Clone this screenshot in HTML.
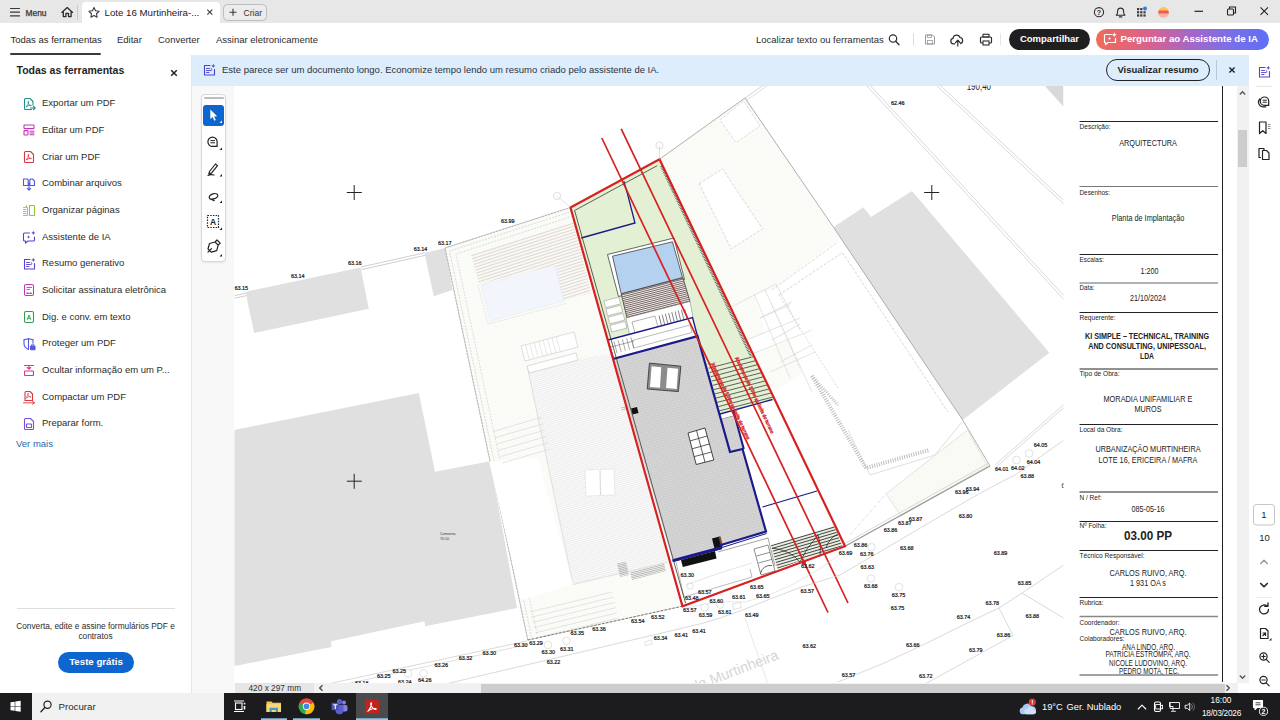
<!DOCTYPE html>
<html lang="pt">
<head>
<meta charset="utf-8">
<title>Lote 16 Murtinheira</title>
<style>
*{box-sizing:border-box;margin:0;padding:0}
html,body{width:1280px;height:720px;overflow:hidden;background:#fff;font-family:"Liberation Sans",Arial,sans-serif;color:#2c2c2c;font-size:9.5px}
.abs{position:absolute}
#titlebar{position:absolute;left:0;top:0;width:1280px;height:22.5px;background:#e7e7e7}
#toolbar{position:absolute;left:0;top:22.5px;width:1280px;height:32.5px;background:#fff}
#leftpanel{position:absolute;left:0;top:55px;width:192px;height:638px;background:#fff;border-right:1px solid #e6e6e6}
#banner{position:absolute;left:192px;top:55px;width:1057px;height:30.5px;background:#ddedfc}
#rail{position:absolute;left:1249px;top:55px;width:31px;height:638px;background:#fff}
#doc{position:absolute;left:234px;top:85.5px;width:1003px;height:597.5px;background:#fff}
#gutter{position:absolute;left:192px;top:85.5px;width:42.5px;height:607.5px;background:#f8f8f8}
#vscroll{position:absolute;left:1237px;top:85.5px;width:12px;height:597.5px;background:#f1f1f1}
#hscroll{position:absolute;left:234.5px;top:683px;width:1003px;height:10px;background:#f1f1f1}
#taskbar{position:absolute;left:0;top:693px;width:1280px;height:27px;background:#1c1c1e}
.t{position:absolute;white-space:nowrap;line-height:12px;height:12px}
.tool{position:absolute;left:42px;white-space:nowrap;line-height:12px;height:12px;font-size:9.5px;color:#2c2c2c}
svg{overflow:visible}
</style>
</head>
<body>
<div id="titlebar">
  <svg class="abs" style="left:0;top:0" width="280" height="23" viewBox="0 0 280 23">
    <g stroke="#3a3a3a" stroke-width="1.2" fill="none" stroke-linecap="round">
      <path d="M10.5 8.5H19.5M10.5 12.2H19.5M10.5 15.9H19.5"/>
    </g>
    <line x1="77.5" y1="5" x2="77.5" y2="20" stroke="#c9c9c9" stroke-width="1"/>
    <path d="M82 23V6a4 4 0 0 1 4-4h130a4 4 0 0 1 4 4V23Z" fill="#fff"/>
    <path d="M61.8 12.4L67.2 7.6L72.6 12.4M63.3 11.4V16.6H65.9V13.4H68.5V16.6H71.1V11.4" fill="none" stroke="#2c2c2c" stroke-width="1.3" stroke-linejoin="round" stroke-linecap="round"/>
    <path d="M94 7.6l1.55 3.2 3.5.5-2.55 2.45.6 3.5L94 15.6l-3.1 1.65.6-3.5-2.55-2.45 3.5-.5Z" fill="none" stroke="#3a3a3a" stroke-width="1.1" stroke-linejoin="round"/>
    <path d="M207.3 9.6l5 5M212.3 9.6l-5 5" stroke="#3a3a3a" stroke-width="1.1" fill="none"/>
    <rect x="223.5" y="4.5" width="43" height="16" rx="4" fill="#ececec" stroke="#bdbdbd"/>
    <path d="M229.5 12.3h7M233 8.8v7" stroke="#3a3a3a" stroke-width="1.1" fill="none"/>
  </svg>
  <div class="t" style="left:25.5px;top:7.4px;font-size:8.4px;color:#333;-webkit-text-stroke:.25px #333">Menu</div>
  <div class="t" style="left:104.5px;top:6.5px;font-size:9.7px;color:#222">Lote 16 Murtinheira-...</div>
  <div class="t" style="left:243.5px;top:6.5px;font-size:8.6px;color:#333">Criar</div>
  <svg class="abs" style="left:1080px;top:0" width="200" height="23" viewBox="1080 0 200 23">
    <circle cx="1099" cy="12.2" r="4.6" fill="none" stroke="#2c2c2c" stroke-width="1.1"/>
    <text x="1099" y="14.8" font-size="7" font-weight="bold" text-anchor="middle" fill="#2c2c2c" font-family="Liberation Sans, sans-serif">?</text>
    <path d="M1116.3 15.2c1.2-.9 1.3-2.2 1.3-3.6 0-2 1.2-3.5 3-3.5s3 1.500 3 3.500c0 1.400.1 2.700 1.300 3.600Z" fill="none" stroke="#2c2c2c" stroke-width="1.1" stroke-linejoin="round"/>
    <path d="M1119.4 16.9h2.4" stroke="#2c2c2c" stroke-width="1.2" fill="none" stroke-linecap="round"/>
    <g fill="#3a3a3a">
      <rect x="1137" y="8" width="2.2" height="2.2"/><rect x="1140.2" y="8" width="2.2" height="2.2"/>
      <rect x="1137" y="11.2" width="2.2" height="2.2"/><rect x="1140.2" y="11.2" width="2.2" height="2.2"/><rect x="1143.400" y="11.2" width="2.2" height="2.2"/>
      <rect x="1137" y="14.4" width="2.2" height="2.2"/><rect x="1140.2" y="14.4" width="2.2" height="2.2"/><rect x="1143.400" y="14.4" width="2.2" height="2.2"/>
    </g>
    <circle cx="1145" cy="8.600" r="2" fill="#2b7de0"/>
    <defs><clipPath id="av"><circle cx="1163.500" cy="12.400" r="5.300"/></clipPath></defs>
    <g clip-path="url(#av)"><rect x="1157" y="6" width="13" height="5" fill="#f7c64a"/><rect x="1157" y="10.5" width="13" height="3.500" fill="#ee5a5a"/><rect x="1157" y="13.500" width="13" height="5" fill="#f3b4a6"/></g>
    <path d="M1194.500 11.300h8.500" stroke="#222" stroke-width="1.200" fill="none"/>
    <rect x="1227.500" y="9" width="6" height="6" rx="1" fill="none" stroke="#222" stroke-width="1.100"/>
    <path d="M1229.500 9V7h6v6h-2" fill="none" stroke="#222" stroke-width="1.100"/>
    <path d="M1260.500 7.400l7.500 7.500M1268 7.400l-7.500 7.500" stroke="#222" stroke-width="1.100" fill="none"/>
  </svg>
</div>
<div id="toolbar">
  <div class="t" style="left:10.5px;top:11px;color:#1f1f1f">Todas as ferramentas</div>
  <div class="abs" style="left:10px;top:30.5px;width:91px;height:2px;background:#3a3a3a;border-radius:1px"></div>
  <div class="t" style="left:117px;top:11px">Editar</div>
  <div class="t" style="left:158px;top:11px">Converter</div>
  <div class="t" style="left:216px;top:11px">Assinar eletronicamente</div>
  <div class="t" style="left:756px;top:11px">Localizar texto ou ferramentas</div>
  <svg class="abs" style="left:880px;top:0" width="130" height="32" viewBox="880 22.5 130 32">
    <circle cx="893" cy="38" r="3.700" fill="none" stroke="#2c2c2c" stroke-width="1.200"/><path d="M895.700 40.800l3.300 3.400" stroke="#2c2c2c" stroke-width="1.300" stroke-linecap="round"/>
    <line x1="913.500" y1="33" x2="913.500" y2="45" stroke="#dcdcdc"/>
    <path d="M925.500 34.500h7l2 2v7h-9Z" fill="none" stroke="#9a9a9a" stroke-width="1"/><rect x="927.500" y="34.500" width="4" height="2.500" fill="none" stroke="#9a9a9a" stroke-width=".8"/><rect x="927.500" y="40" width="5" height="3.500" fill="none" stroke="#9a9a9a" stroke-width=".8"/>
    <path d="M954.800 43.300h-1.300a2.700 2.700 0 0 1-.5-5.350 3.600 3.600 0 0 1 7-.95 2.900 2.900 0 0 1 2.600 2.900 3 3 0 0 1-2 3.200" fill="none" stroke="#2c2c2c" stroke-width="1.200" stroke-linecap="round"/>
    <path d="M957.800 45.500v-5.500M955.600 42l2.200-2.300 2.200 2.300" fill="none" stroke="#2c2c2c" stroke-width="1.200" stroke-linecap="round" stroke-linejoin="round"/>
    <rect x="980.500" y="36.500" width="11" height="6" rx="1" fill="none" stroke="#2c2c2c" stroke-width="1.200"/><rect x="983" y="33.800" width="6" height="2.700" fill="none" stroke="#2c2c2c" stroke-width="1.100"/><rect x="983" y="40.500" width="6" height="4" fill="#fff" stroke="#2c2c2c" stroke-width="1.100"/>
    <line x1="1000.500" y1="33" x2="1000.500" y2="45" stroke="#e4e4e4"/>
  </svg>
  <div class="abs" style="left:1009px;top:6px;width:81px;height:21.5px;border-radius:11px;background:#1f1f1f"></div>
  <div class="t" style="left:1009px;top:10.5px;width:81px;text-align:center;color:#fff;font-weight:bold;font-size:9.500px">Compartilhar</div>
  <div class="abs" style="left:1096px;top:6.5px;width:173px;height:21px;border-radius:10.5px;background:linear-gradient(90deg,#f26a57 0%,#d9628a 30%,#a467c8 55%,#7a6fe8 78%,#5c70f5 100%)"></div>
  <svg class="abs" style="left:1102px;top:8.5px" width="16" height="16" viewBox="0 0 16 16"><path d="M2.500 3.500h7.500M13.500 7v4.500h-7.500l-2.500 2.200v-2.200h-1v-8" fill="none" stroke="#fff" stroke-width="1.200" stroke-linejoin="round"/><path d="M12.300 1.200l.7 1.800 1.800.7-1.800.7-.7 1.800-.7-1.800-1.800-.7 1.800-.7Z" fill="#fff"/><path d="M7.500 5.800l.5 1.200 1.200.5-1.200.5-.5 1.200-.5-1.200-1.200-.5 1.200-.5Z" fill="#fff"/></svg>
  <div class="t" style="left:1120.500px;top:10.5px;color:#fff;font-weight:bold;font-size:9.700px">Perguntar ao Assistente de IA</div>
</div>
<div id="leftpanel">
<div class="t" style="left:16.5px;top:8.500px;font-size:10.500px;font-weight:bold;color:#1f1f1f">Todas as ferramentas</div>
<svg class="abs" style="left:168px;top:12px" width="12" height="12" viewBox="0 0 12 12"><path d="M3.200 3.200l5.600 5.600M8.800 3.200l-5.600 5.600" stroke="#222" stroke-width="1.500" fill="none"/></svg>
<svg class="abs" style="left:22px;top:41.7px" width="14" height="14" viewBox="0 0 14 14"><g fill="none" stroke="#1d8f8a" stroke-width="1.100" stroke-linejoin="round" stroke-linecap="round"><path d="M9.500 12.500h-6a1 1 0 0 1-1-1v-9a1 1 0 0 1 1-1h4.500l3 3v3.500" /><path d="M4.6 9.6c.9-1.400 1.800-3.200 2.200-4.600.200-.800-.500-1.100-.700-.300-.300 1.400 1.200 3.600 2.800 4.100.900.200.900-.600 0-.600-1.400 0-3.200.600-4.300 1.400-.600.500-.200 1 .000 0" stroke-width=".8"/><path d="M8.500 11h4.500M11.500 9.300l1.700 1.700-1.700 1.700"/></g></svg>
<div class="tool" style="top:42.4px">Exportar um PDF</div>
<svg class="abs" style="left:22px;top:68.4px" width="14" height="14" viewBox="0 0 14 14"><g fill="none" stroke="#c038b8" stroke-width="1.100" stroke-linejoin="round" stroke-linecap="round"><rect x="2" y="2" width="10" height="3.600" rx=".6"/><rect x="2" y="7.600" width="4" height="4.400" rx=".6"/><path d="M8 8.200h4M8 10h4M8 11.800h4"/></g></svg>
<div class="tool" style="top:69.1px">Editar um PDF</div>
<svg class="abs" style="left:22px;top:95.0px" width="14" height="14" viewBox="0 0 14 14"><g fill="none" stroke="#d7373f" stroke-width="1.100" stroke-linejoin="round" stroke-linecap="round"><path d="M3.500 1.500h5l3 3v7a1 1 0 0 1-1 1h-7a1 1 0 0 1-1-1v-9a1 1 0 0 1 1-1Z"/><path d="M4.6 9.6c.9-1.400 1.800-3.200 2.200-4.600.200-.800-.500-1.100-.700-.300-.300 1.400 1.200 3.600 2.800 4.100.900.200.900-.600 0-.600-1.400 0-3.200.600-4.300 1.400-.600.500-.200 1 .000 0" stroke-width=".8"/></g></svg>
<div class="tool" style="top:95.7px">Criar um PDF</div>
<svg class="abs" style="left:22px;top:121.7px" width="14" height="14" viewBox="0 0 14 14"><g fill="none" stroke="#5258e4" stroke-width="1.100" stroke-linejoin="round" stroke-linecap="round"><path d="M6.200 3v5.500h-4.700v-6.500h3.700ZM7.800 3v5.500h4.700v-4.500l-2-2h-1.700ZM7 6v7M5.300 11.400l1.700 1.700 1.700-1.700"/></g></svg>
<div class="tool" style="top:122.4px">Combinar arquivos</div>
<svg class="abs" style="left:22px;top:148.4px" width="14" height="14" viewBox="0 0 14 14"><g fill="none" stroke="#8dc63f" stroke-width="1.100" stroke-linejoin="round" stroke-linecap="round"><rect x="7.500" y="2.500" width="5" height="10" rx=".6"/><path d="M5.500 4.500v8h-4M1.500 6.500h2.500M1.500 8.500h2.500M1.500 10.500h2.500M1.500 4.500h2l1-2v2" stroke-width=".9"/></g></svg>
<div class="tool" style="top:149.1px">Organizar páginas</div>
<svg class="abs" style="left:22px;top:175.1px" width="14" height="14" viewBox="0 0 14 14"><g fill="none" stroke="#5a3fd0" stroke-width="1.100" stroke-linejoin="round" stroke-linecap="round"><path d="M7.500 3h-5a1 1 0 0 0-1 1v6a1 1 0 0 0 1 1h1v2.200l2.500-2.200h5.500a1 1 0 0 0 1-1v-3"/><path d="M11.300.8l.6 1.500 1.500.6-1.500.6-.6 1.500-.6-1.500-1.500-.6 1.500-.6Z" fill="#5a3fd0" stroke="none"/><path d="M6.500 5.300l.5 1.200 1.200.5-1.200.5-.5 1.200-.5-1.200-1.200-.5 1.200-.5Z" fill="#5a3fd0" stroke="none"/></g></svg>
<div class="tool" style="top:175.8px">Assistente de IA</div>
<svg class="abs" style="left:22px;top:201.7px" width="14" height="14" viewBox="0 0 14 14"><g fill="none" stroke="#5a3fd0" stroke-width="1.100" stroke-linejoin="round" stroke-linecap="round"><path d="M8 2.500h-5.500v9.500h10v-5.500"/><path d="M4.500 5.500h3M4.500 7.500h4M4.500 9.500h2.500" stroke-width=".9"/><path d="M11.300.8l.6 1.500 1.500.6-1.500.6-.6 1.500-.6-1.500-1.500-.6 1.500-.6Z" fill="#5a3fd0" stroke="none"/><path d="M9 7.500l1.200-1-1.200-1" stroke-width=".9"/></g></svg>
<div class="tool" style="top:202.4px">Resumo generativo</div>
<svg class="abs" style="left:22px;top:228.4px" width="14" height="14" viewBox="0 0 14 14"><g fill="none" stroke="#c038b8" stroke-width="1.100" stroke-linejoin="round" stroke-linecap="round"><rect x="2.500" y="1.500" width="9" height="11" rx="1.500"/><path d="M5 4.500h4.500M5 6.500h2.500" stroke-width=".9"/><path d="M5 10.300h1.200M8 10.300h1.200" stroke-width="1.600"/></g></svg>
<div class="tool" style="top:229.1px">Solicitar assinatura eletrônica</div>
<svg class="abs" style="left:22px;top:255.1px" width="14" height="14" viewBox="0 0 14 14"><g fill="none" stroke="#2d9d4f" stroke-width="1.100" stroke-linejoin="round" stroke-linecap="round"><rect x="2.500" y="1.500" width="9" height="11" rx="1.500"/><path d="M5.300 9.500l1.700-4.500 1.700 4.500M5.900 8.200h2.200" stroke-width=".9"/></g></svg>
<div class="tool" style="top:255.8px">Dig. e conv. em texto</div>
<svg class="abs" style="left:22px;top:281.7px" width="14" height="14" viewBox="0 0 14 14"><g fill="none" stroke="#5258e4" stroke-width="1.100" stroke-linejoin="round" stroke-linecap="round"><path d="M6.500 1.500c-1.500.8-3 1.100-4.500 1.100v4c0 2.800 1.800 4.800 4.500 5.900ZM6.500 1.500c1.500.8 3 1.100 4.500 1.100v3"/><rect x="8.500" y="9" width="4.500" height="3.800" rx=".5" fill="#5258e4"/><path d="M9.700 9v-1a1.100 1.100 0 0 1 2.200 0v1" stroke-width=".9"/></g></svg>
<div class="tool" style="top:282.4px">Proteger um PDF</div>
<svg class="abs" style="left:22px;top:308.4px" width="14" height="14" viewBox="0 0 14 14"><g fill="none" stroke="#d83790" stroke-width="1.100" stroke-linejoin="round" stroke-linecap="round"><path d="M2.500 2.500h9M7 2.500v3.500M5.300 4.500l1.700 1.700 1.700-1.700"/><rect x="2.500" y="8" width="9" height="4.500" rx=".5"/></g></svg>
<div class="tool" style="top:309.1px">Ocultar informação em um P...</div>
<svg class="abs" style="left:22px;top:335.1px" width="14" height="14" viewBox="0 0 14 14"><g fill="none" stroke="#d7373f" stroke-width="1.100" stroke-linejoin="round" stroke-linecap="round"><path d="M4 1.500h4l2.500 2.500v6.500h-7.500v-8a1 1 0 0 1 1-1Z"/><path d="M1.500 12.800h11M10.500 11.300l2 1.500-2 1.500" stroke-width=".9"/><path d="M4.6 9.6c.9-1.400 1.800-3.200 2.200-4.600.200-.800-.500-1.100-.700-.300-.300 1.400 1.200 3.600 2.800 4.100.900.200.900-.600 0-.600-1.400 0-3.200.600-4.300 1.400-.600.500-.200 1 .000 0" stroke-width=".7" transform="translate(.3,-.8) scale(.9)"/></g></svg>
<div class="tool" style="top:335.8px">Compactar um PDF</div>
<svg class="abs" style="left:22px;top:361.7px" width="14" height="14" viewBox="0 0 14 14"><g fill="none" stroke="#7a4fd8" stroke-width="1.100" stroke-linejoin="round" stroke-linecap="round"><path d="M3.500 1.500h5l3 3v7a1 1 0 0 1-1 1h-7a1 1 0 0 1-1-1v-9a1 1 0 0 1 1-1Z"/><rect x="4.500" y="7" width="5" height="3.500" rx=".5"/></g></svg>
<div class="tool" style="top:362.4px">Preparar form.</div>
<div class="t" style="left:16px;top:383px;color:#2768b3">Ver mais</div>
<div class="abs" style="left:17px;top:552.500px;width:158px;height:1px;background:#dedede"></div>
<div class="t" style="left:0;top:564.800px;width:191px;text-align:center;font-size:8.300px;color:#2c2c2c">Converta, edite e assine formulários PDF e</div>
<div class="t" style="left:0;top:574.800px;width:191px;text-align:center;font-size:8.300px;color:#2c2c2c">contratos</div>
<div class="abs" style="left:58px;top:597px;width:76px;height:21px;border-radius:10.500px;background:#0d66d0"></div>
<div class="t" style="left:58px;top:600.800px;width:76px;text-align:center;color:#fff;font-weight:bold;font-size:9.700px">Teste grátis</div>
</div>
<div id="banner">
  <svg class="abs" style="left:10px;top:8px" width="14" height="14" viewBox="0 0 14 14"><g fill="none" stroke="#4a44c8" stroke-width="1.100" stroke-linejoin="round" stroke-linecap="round"><path d="M8 2.500h-5.500v9.500h10v-5.500"/><path d="M4.500 5.500h3M4.500 7.500h4M4.500 9.500h2.500" stroke-width=".9"/><path d="M11.300.8l.6 1.500 1.500.6-1.500.6-.6 1.500-.6-1.500-1.500-.6 1.500-.6Z" fill="#4a44c8" stroke="none"/><path d="M9 7.500l1.200-1-1.200-1" stroke-width=".9"/></g></svg>
  <div class="t" style="left:30px;top:8.700px;color:#2a3340">Este parece ser um documento longo. Economize tempo lendo um resumo criado pelo assistente de IA.</div>
  <div class="abs" style="left:914px;top:4px;width:104px;height:22px;border:1.500px solid #222;border-radius:11px"></div>
  <div class="t" style="left:914px;top:8.700px;width:104px;text-align:center;font-weight:bold;color:#1f1f1f">Visualizar resumo</div>
  <div class="abs" style="left:1023.500px;top:5px;width:1px;height:20px;background:#b9c6d4"></div>
  <svg class="abs" style="left:1034px;top:9px" width="12" height="12" viewBox="0 0 12 12"><path d="M3.400 3.400l5.200 5.200M8.600 3.400l-5.200 5.200" stroke="#222" stroke-width="1.400" fill="none"/></svg>
</div>
<div id="gutter"></div>
<div id="doc"></div>
<svg class="abs" style="left:0;top:0" width="1280" height="720" viewBox="0 0 1280 720">
<defs><clipPath id="dv"><rect x="234.5" y="85.5" width="829" height="597.5"/></clipPath></defs>
<g clip-path="url(#dv)">
<polygon points="245.5,291.8 360.5,267.5 368.8,308.8 254.2,333.0" fill="#e0e0e0" stroke="none" stroke-width="1" />
<polygon points="424.5,253.0 445.0,248.0 452.5,290.0 433.8,296.2" fill="#e0e0e0" stroke="none" stroke-width="1" />
<polygon points="234.0,430.0 418.8,393.0 435.0,471.8 490.0,461.2 517.0,608.0 425.0,626.2 424.5,621.2 331.2,641.2 331.2,647.0 234.0,666.2" fill="#e0e0e0" stroke="none" stroke-width="1" />
<polygon points="833.5,227.3 863.3,207.3 871.0,217.0 912.0,191.0 1049.3,352.7 962.7,420.0" fill="#e0e0e0" stroke="none" stroke-width="1" />
<polygon points="1045.0,86.0 1063.5,86.0 1063.5,106.7" fill="#d9d9d9" stroke="none" stroke-width="1" />
<line x1="234.0" y1="295.8" x2="246.0" y2="293.2" stroke="#cfcfcf" stroke-width="1" />
<line x1="234.0" y1="298.3" x2="246.0" y2="295.7" stroke="#cfcfcf" stroke-width="1" />
<line x1="361.0" y1="267.0" x2="424.5" y2="252.8" stroke="#cfcfcf" stroke-width="1" />
<line x1="361.6" y1="269.6" x2="425.0" y2="255.4" stroke="#cfcfcf" stroke-width="1" />
<polygon points="445.0,248.0 570.5,207.5 682.5,606.2 527.8,640.0" fill="#fdfefb" stroke="#bdbdbd" stroke-width="0.7" />
<clipPath id="c1"><polygon points="445.0,248.0 570.5,207.5 682.5,606.2 527.8,640.0"/></clipPath>
<path clip-path="url(#c1)" d="M251.2 262.4L725.1 111.2M251.9 264.5L725.7 113.3M252.5 266.6L726.4 115.4M253.2 268.7L727.1 117.5M253.9 270.8L727.7 119.6M254.5 272.9L728.4 121.7M255.2 275.0L729.1 123.8M255.9 277.1L729.8 125.9M256.5 279.2L730.4 128.0M257.2 281.3L731.1 130.1M257.9 283.4L731.8 132.2M258.6 285.5L732.4 134.3M259.2 287.6L733.1 136.3M259.9 289.7L733.8 138.4M260.6 291.8L734.4 140.5M261.2 293.9L735.1 142.6M261.9 296.0L735.8 144.7M262.6 298.1L736.4 146.8M263.2 300.2L737.1 148.9M263.9 302.3L737.8 151.0M264.6 304.3L738.4 153.1M265.2 306.4L739.1 155.2M265.9 308.5L739.8 157.3M266.6 310.6L740.5 159.4M267.3 312.7L741.1 161.5M267.9 314.8L741.8 163.6M268.6 316.9L742.5 165.7M269.3 319.0L743.1 167.8M269.9 321.1L743.8 169.9M270.6 323.2L744.5 172.0M271.3 325.3L745.1 174.1M271.9 327.4L745.8 176.2M272.6 329.5L746.5 178.3M273.3 331.6L747.1 180.4M273.9 333.7L747.8 182.5M274.6 335.8L748.5 184.6M275.3 337.9L749.1 186.6M275.9 340.0L749.8 188.7M276.6 342.1L750.5 190.8M277.3 344.2L751.2 192.9M278.0 346.3L751.8 195.0M278.6 348.4L752.5 197.1M279.3 350.5L753.2 199.2M280.0 352.6L753.8 201.3M280.6 354.6L754.5 203.4M281.3 356.7L755.2 205.5M282.0 358.8L755.8 207.6M282.6 360.9L756.5 209.7M283.3 363.0L757.2 211.8M284.0 365.1L757.8 213.9M284.6 367.2L758.5 216.0M285.3 369.3L759.2 218.1M286.0 371.4L759.9 220.2M286.6 373.5L760.5 222.3M287.3 375.6L761.2 224.4M288.0 377.7L761.9 226.5M288.7 379.8L762.5 228.6M289.3 381.9L763.2 230.7M290.0 384.0L763.9 232.8M290.7 386.1L764.5 234.9M291.3 388.2L765.2 236.9M292.0 390.3L765.9 239.0M292.7 392.4L766.5 241.1M293.3 394.5L767.2 243.2M294.0 396.6L767.9 245.3M294.7 398.7L768.5 247.4M295.3 400.8L769.2 249.5M296.0 402.9L769.9 251.6M296.7 404.9L770.6 253.7M297.4 407.0L771.2 255.8M298.0 409.1L771.9 257.9M298.7 411.2L772.6 260.0M299.4 413.3L773.2 262.1M300.0 415.4L773.9 264.2M300.7 417.5L774.6 266.3M301.4 419.6L775.2 268.4M302.0 421.7L775.9 270.5M302.7 423.8L776.6 272.6M303.4 425.9L777.2 274.7M304.0 428.0L777.9 276.8M304.7 430.1L778.6 278.9M305.4 432.2L779.2 281.0M306.0 434.3L779.9 283.1M306.7 436.4L780.6 285.2M307.4 438.5L781.3 287.2M308.1 440.6L781.9 289.3M308.7 442.7L782.6 291.4M309.4 444.8L783.3 293.5M310.1 446.9L783.9 295.6M310.7 449.0L784.6 297.7M311.4 451.1L785.3 299.8M312.1 453.2L785.9 301.9M312.7 455.2L786.6 304.0M313.4 457.3L787.3 306.1M314.1 459.4L787.9 308.2M314.7 461.5L788.6 310.3M315.4 463.6L789.3 312.4M316.1 465.7L790.0 314.5M316.7 467.8L790.6 316.6M317.4 469.9L791.3 318.7M318.1 472.0L792.0 320.8M318.8 474.1L792.6 322.9M319.4 476.2L793.3 325.0M320.1 478.3L794.0 327.1M320.8 480.4L794.6 329.2M321.4 482.5L795.3 331.3M322.1 484.6L796.0 333.4M322.8 486.7L796.6 335.5M323.4 488.8L797.3 337.6M324.1 490.9L798.0 339.6M324.8 493.0L798.6 341.7M325.4 495.1L799.3 343.8M326.1 497.2L800.0 345.9M326.8 499.3L800.7 348.0M327.4 501.4L801.3 350.1M328.1 503.5L802.0 352.2M328.8 505.5L802.7 354.3M329.5 507.6L803.3 356.4M330.1 509.7L804.0 358.5M330.8 511.8L804.7 360.6M331.5 513.9L805.3 362.7M332.1 516.0L806.0 364.8M332.8 518.1L806.7 366.9M333.5 520.2L807.3 369.0M334.1 522.3L808.0 371.1M334.8 524.4L808.7 373.2M335.5 526.5L809.3 375.3M336.1 528.6L810.0 377.4M336.8 530.7L810.7 379.5M337.5 532.8L811.4 381.6M338.2 534.9L812.0 383.7M338.8 537.0L812.7 385.8M339.5 539.1L813.4 387.9M340.2 541.2L814.0 389.9M340.8 543.3L814.7 392.0M341.5 545.4L815.4 394.1M342.2 547.5L816.0 396.2M342.8 549.6L816.7 398.3M343.5 551.7L817.4 400.4M344.2 553.8L818.0 402.5M344.8 555.8L818.7 404.6M345.5 557.9L819.4 406.7M346.2 560.0L820.1 408.8M346.8 562.1L820.7 410.9M347.5 564.2L821.4 413.0M348.2 566.3L822.1 415.1M348.9 568.4L822.7 417.2M349.5 570.5L823.4 419.3M350.2 572.6L824.1 421.4M350.9 574.7L824.7 423.5M351.5 576.8L825.4 425.6M352.2 578.9L826.1 427.7M352.9 581.0L826.7 429.8M353.5 583.1L827.4 431.9M354.2 585.2L828.1 434.0M354.9 587.3L828.7 436.1M355.5 589.4L829.4 438.2M356.2 591.5L830.1 440.2M356.9 593.6L830.8 442.3M357.5 595.7L831.4 444.4M358.2 597.8L832.1 446.5M358.9 599.9L832.8 448.6M359.6 602.0L833.4 450.7M360.2 604.1L834.1 452.8M360.9 606.2L834.8 454.9M361.6 608.2L835.4 457.0M362.2 610.3L836.1 459.1M362.9 612.4L836.8 461.2M363.6 614.5L837.4 463.3M364.2 616.6L838.1 465.4M364.9 618.7L838.8 467.5M365.6 620.8L839.4 469.6M366.2 622.9L840.1 471.7M366.9 625.0L840.8 473.8M367.6 627.1L841.5 475.9M368.3 629.2L842.1 478.0M368.9 631.3L842.8 480.1M369.6 633.4L843.5 482.2M370.3 635.5L844.1 484.3M370.9 637.6L844.8 486.4M371.6 639.7L845.5 488.5M372.3 641.8L846.1 490.5M372.9 643.9L846.8 492.6M373.6 646.0L847.5 494.7M374.3 648.1L848.1 496.8M374.9 650.2L848.8 498.9M375.6 652.3L849.5 501.0M376.3 654.4L850.1 503.1M376.9 656.5L850.8 505.2M377.6 658.5L851.5 507.3M378.3 660.6L852.2 509.4M379.0 662.7L852.8 511.5M379.6 664.8L853.5 513.6M380.3 666.9L854.2 515.7M381.0 669.0L854.8 517.8M381.6 671.1L855.5 519.9M382.3 673.2L856.2 522.0M383.0 675.3L856.8 524.1M383.6 677.4L857.5 526.2M384.3 679.5L858.2 528.3M385.0 681.6L858.8 530.4M385.6 683.7L859.5 532.5M386.3 685.8L860.2 534.6M387.0 687.9L860.9 536.7M387.6 690.0L861.5 538.8M388.3 692.1L862.2 540.8M389.0 694.2L862.9 542.9M389.7 696.3L863.5 545.0M390.3 698.4L864.2 547.1M391.0 700.5L864.9 549.2M391.7 702.6L865.5 551.3M392.3 704.7L866.2 553.4M393.0 706.8L866.9 555.5M393.7 708.8L867.5 557.6M394.3 710.9L868.2 559.7M395.0 713.0L868.9 561.8M395.7 715.1L869.5 563.9M396.3 717.2L870.2 566.0M397.0 719.3L870.9 568.1M397.7 721.4L871.6 570.2M398.4 723.5L872.2 572.3M399.0 725.6L872.9 574.4M399.7 727.7L873.6 576.5M400.4 729.8L874.2 578.6M401.0 731.9L874.9 580.7M401.7 734.0L875.6 582.8M402.4 736.1L876.2 584.9" stroke="#f3f5ec" stroke-width="0.6" fill="none"/>
<polyline points="527.8,640.0 445.0,248.0 570.5,207.5" fill="none" stroke="#9a9a9a" stroke-width="0.6" stroke-dasharray="2 1.2"/>
<polyline points="531.5,637.0 449.5,251.0 571.5,211.5" fill="none" stroke="#c4c4c4" stroke-width="0.6" stroke-dasharray="2 1.2"/>
<polyline points="537.0,634.0 456.0,254.0 573.0,216.0" fill="none" stroke="#c8c8c8" stroke-width="0.6" stroke-dasharray="2 1.2"/>
<polygon points="471.0,254.0 574.0,221.0 591.0,293.0 562.5,301.0 555.0,265.0 479.0,284.0" fill="#faf8f5" stroke="none" stroke-width="1" />
<clipPath id="c2"><polygon points="471.0,254.0 574.0,221.0 591.0,293.0 562.5,301.0 555.0,265.0 479.0,284.0"/></clipPath>
<path clip-path="url(#c2)" d="M437.9 212.9L579.1 167.9M438.8 215.8L580.0 170.7M439.7 218.6L580.9 173.6M440.6 221.5L581.8 176.4M441.5 224.4L582.7 179.3M442.4 227.2L583.6 182.2M443.3 230.1L584.5 185.0M444.2 232.9L585.5 187.9M445.2 235.8L586.4 190.7M446.1 238.7L587.3 193.6M447.0 241.5L588.2 196.4M447.9 244.4L589.1 199.3M448.8 247.2L590.0 202.2M449.7 250.1L590.9 205.0M450.6 252.9L591.8 207.9M451.5 255.8L592.8 210.7M452.5 258.7L593.7 213.6M453.4 261.5L594.6 216.5M454.3 264.4L595.5 219.3M455.2 267.2L596.4 222.2M456.1 270.1L597.3 225.0M457.0 272.9L598.2 227.9M457.9 275.8L599.1 230.7M458.8 278.7L600.0 233.6M459.8 281.5L601.0 236.5M460.7 284.4L601.9 239.3M461.6 287.2L602.8 242.2M462.5 290.1L603.7 245.0M463.4 293.0L604.6 247.9M464.3 295.8L605.5 250.7M465.2 298.7L606.4 253.6M466.1 301.5L607.3 256.5M467.1 304.4L608.3 259.3M468.0 307.2L609.2 262.2M468.9 310.1L610.1 265.0M469.8 313.0L611.0 267.9M470.7 315.8L611.9 270.8M471.6 318.7L612.8 273.6M472.5 321.5L613.7 276.5M473.4 324.4L614.6 279.3M474.3 327.2L615.6 282.2M475.3 330.1L616.5 285.0M476.2 333.0L617.4 287.9M477.1 335.8L618.3 290.8M478.0 338.7L619.2 293.6M478.9 341.5L620.1 296.5M479.8 344.4L621.0 299.3M480.7 347.3L621.9 302.2M481.6 350.1L622.9 305.0M482.6 353.0L623.8 307.9" stroke="#d6cfc8" stroke-width="0.8" fill="none"/>
<polygon points="481.0,285.0 555.0,265.5 564.0,301.0 490.0,321.0" fill="#f2f5fc" stroke="#e4e8ef" stroke-width="0.5" />
<polyline points="478.0,284.5 488.0,324.0 566.0,303.5" fill="none" stroke="#d5d5d5" stroke-width="0.6" stroke-dasharray="2 1"/>
<polygon points="527.5,367.5 612.5,353.5 668.5,562.0 573.0,584.5" fill="#fbfbfb" stroke="none" stroke-width="1" />
<clipPath id="c3"><polygon points="527.5,367.5 612.5,353.5 668.5,562.0 573.0,584.5"/></clipPath>
<path clip-path="url(#c3)" d="M430.7 370.4L696.6 301.7M431.2 372.4L697.1 303.6M431.7 374.3L697.6 305.5M432.2 376.2L698.1 307.5M432.7 378.2L698.6 309.4M433.2 380.1L699.1 311.4M433.7 382.1L699.6 313.3M434.2 384.0L700.1 315.2M434.7 385.9L700.6 317.2M435.2 387.9L701.1 319.1M435.7 389.8L701.6 321.0M436.2 391.7L702.1 323.0M436.7 393.7L702.6 324.9M437.2 395.6L703.1 326.8M437.7 397.5L703.6 328.8M438.2 399.5L704.1 330.7M438.7 401.4L704.6 332.7M439.2 403.4L705.1 334.6M439.7 405.3L705.6 336.5M440.2 407.2L706.1 338.5M440.7 409.2L706.6 340.4M441.2 411.1L707.1 342.3M441.7 413.0L707.6 344.3M442.2 415.0L708.1 346.2M442.7 416.9L708.6 348.1M443.2 418.8L709.1 350.1M443.7 420.8L709.6 352.0M444.2 422.7L710.1 354.0M444.7 424.7L710.6 355.9M445.2 426.6L711.1 357.8M445.7 428.5L711.6 359.8M446.2 430.5L712.1 361.7M446.7 432.4L712.6 363.6M447.2 434.3L713.1 365.6M447.7 436.3L713.6 367.5M448.2 438.2L714.1 369.4M448.7 440.1L714.6 371.4M449.2 442.1L715.1 373.3M449.7 444.0L715.6 375.3M450.2 446.0L716.1 377.2M450.7 447.9L716.6 379.1M451.2 449.8L717.1 381.1M451.7 451.8L717.6 383.0M452.2 453.7L718.1 384.9M452.7 455.6L718.6 386.9M453.2 457.6L719.1 388.8M453.7 459.5L719.6 390.7M454.2 461.4L720.1 392.7M454.7 463.4L720.6 394.6M455.2 465.3L721.1 396.6M455.7 467.3L721.6 398.5M456.2 469.2L722.1 400.4M456.7 471.1L722.6 402.4M457.2 473.1L723.1 404.3M457.7 475.0L723.6 406.2M458.2 476.9L724.1 408.2M458.7 478.9L724.6 410.1M459.2 480.8L725.1 412.0M459.7 482.7L725.6 414.0M460.2 484.7L726.1 415.9M460.7 486.6L726.6 417.9M461.2 488.6L727.1 419.8M461.7 490.5L727.6 421.7M462.2 492.4L728.1 423.7M462.7 494.4L728.6 425.6M463.2 496.3L729.1 427.5M463.7 498.2L729.6 429.5M464.2 500.2L730.1 431.4M464.7 502.1L730.6 433.3M465.2 504.0L731.1 435.3M465.7 506.0L731.6 437.2M466.2 507.9L732.1 439.2M466.7 509.9L732.6 441.1M467.2 511.8L733.1 443.0M467.7 513.7L733.6 445.0M468.2 515.7L734.1 446.9M468.7 517.6L734.6 448.8M469.2 519.5L735.1 450.8M469.7 521.5L735.6 452.7M470.2 523.4L736.1 454.6M470.7 525.3L736.6 456.6M471.2 527.3L737.1 458.5M471.7 529.2L737.6 460.5M472.2 531.2L738.1 462.4M472.7 533.1L738.6 464.3M473.2 535.0L739.1 466.3M473.7 537.0L739.6 468.2M474.2 538.9L740.1 470.1M474.7 540.8L740.6 472.1M475.2 542.8L741.1 474.0M475.7 544.7L741.6 475.9M476.2 546.6L742.1 477.9M476.7 548.6L742.6 479.8M477.2 550.5L743.1 481.8M477.7 552.5L743.6 483.7M478.2 554.4L744.1 485.6M478.7 556.3L744.6 487.6M479.3 558.3L745.1 489.5M479.8 560.2L745.6 491.4M480.3 562.1L746.1 493.4M480.8 564.1L746.6 495.3M481.3 566.0L747.1 497.2M481.8 567.9L747.6 499.2M482.3 569.9L748.1 501.1M482.8 571.8L748.6 503.1M483.3 573.7L749.1 505.0M483.8 575.7L749.6 506.9M484.3 577.6L750.1 508.9M484.8 579.6L750.6 510.8M485.3 581.5L751.1 512.7M485.8 583.4L751.6 514.7M486.3 585.4L752.1 516.6M486.8 587.3L752.6 518.5M487.3 589.2L753.1 520.5M487.8 591.2L753.6 522.4M488.3 593.1L754.1 524.4M488.8 595.0L754.6 526.3M489.3 597.0L755.2 528.2M489.8 598.9L755.7 530.2M490.3 600.9L756.2 532.1M490.8 602.8L756.7 534.0M491.3 604.7L757.2 536.0M491.8 606.7L757.7 537.9M492.3 608.6L758.2 539.8M492.8 610.5L758.7 541.8M493.3 612.5L759.2 543.7M493.8 614.4L759.7 545.6M494.3 616.3L760.2 547.6M494.8 618.3L760.7 549.5M495.3 620.2L761.2 551.5M495.8 622.2L761.7 553.4M496.3 624.1L762.2 555.3M496.8 626.0L762.7 557.3M497.3 628.0L763.2 559.2M497.8 629.9L763.7 561.1M498.3 631.8L764.2 563.1M498.8 633.8L764.7 565.0M499.3 635.7L765.2 566.9" stroke="#e3e3e3" stroke-width="0.6" fill="none"/>
<polyline points="527.5,367.5 573.0,584.5 668.5,562.0" fill="none" stroke="#cfcfcf" stroke-width="0.6" />
<polygon points="489.0,461.5 537.5,457.5 573.0,584.5 521.0,600.0" fill="#ffffff" stroke="none" stroke-width="1" />
<polygon points="521.0,346.0 574.0,332.0 578.0,347.0 525.0,361.0" fill="#ffffff" stroke="#c9c9c9" stroke-width="0.6" />
<line x1="525.4" y1="344.8" x2="529.4" y2="359.8" stroke="#cfcfcf" stroke-width="0.5" />
<line x1="529.8" y1="343.7" x2="533.8" y2="358.7" stroke="#cfcfcf" stroke-width="0.5" />
<line x1="534.2" y1="342.5" x2="538.2" y2="357.5" stroke="#cfcfcf" stroke-width="0.5" />
<line x1="538.7" y1="341.3" x2="542.7" y2="356.3" stroke="#cfcfcf" stroke-width="0.5" />
<line x1="543.1" y1="340.2" x2="547.1" y2="355.2" stroke="#cfcfcf" stroke-width="0.5" />
<line x1="547.5" y1="339.0" x2="551.5" y2="354.0" stroke="#cfcfcf" stroke-width="0.5" />
<line x1="551.9" y1="337.8" x2="555.9" y2="352.8" stroke="#cfcfcf" stroke-width="0.5" />
<line x1="556.3" y1="336.7" x2="560.3" y2="351.7" stroke="#cfcfcf" stroke-width="0.5" />
<polygon points="527.0,366.0 576.0,353.0 578.0,360.0 529.0,373.0" fill="#ffffff" stroke="#c4c4c4" stroke-width="0.6" />
<line x1="493.0" y1="431.5" x2="541.0" y2="417.5" stroke="#d4d4d4" stroke-width="0.6" />
<line x1="494.8" y1="437.8" x2="542.8" y2="423.8" stroke="#d4d4d4" stroke-width="0.6" />
<line x1="496.6" y1="444.1" x2="544.6" y2="430.1" stroke="#d4d4d4" stroke-width="0.6" />
<line x1="498.4" y1="450.4" x2="546.4" y2="436.4" stroke="#d4d4d4" stroke-width="0.6" />
<line x1="500.2" y1="456.7" x2="548.2" y2="442.7" stroke="#d4d4d4" stroke-width="0.6" />
<line x1="502.0" y1="463.0" x2="550.0" y2="449.0" stroke="#d4d4d4" stroke-width="0.6" />
<line x1="530.0" y1="612.0" x2="612.0" y2="592.0" stroke="#cccccc" stroke-width="0.5" />
<line x1="531.3" y1="617.2" x2="613.3" y2="597.2" stroke="#cccccc" stroke-width="0.5" />
<line x1="532.6" y1="622.4" x2="614.6" y2="602.4" stroke="#cccccc" stroke-width="0.5" />
<line x1="533.9" y1="627.6" x2="615.9" y2="607.6" stroke="#cccccc" stroke-width="0.5" />
<line x1="535.2" y1="632.8" x2="617.2" y2="612.8" stroke="#cccccc" stroke-width="0.5" />
<line x1="536.5" y1="638.0" x2="618.5" y2="618.0" stroke="#cccccc" stroke-width="0.5" />
<polygon points="585.0,470.0 614.0,469.0 615.0,495.0 586.0,496.0" fill="#ffffff" stroke="#cccccc" stroke-width="0.6" stroke-dasharray="1.5 1"/>
<line x1="600.0" y1="470.0" x2="600.5" y2="495.0" stroke="#cccccc" stroke-width="0.8" />
<clipPath id="c4"><polygon points="617.0,563.5 626.0,561.5 629.0,575.0 620.0,577.0"/></clipPath>
<path clip-path="url(#c4)" d="M608.6 560.8L631.5 554.9M609.0 562.4L631.9 556.5M609.5 564.1L632.3 558.2M609.9 565.7L632.7 559.8M610.3 567.4L633.2 561.5M610.7 569.0L633.6 563.1M611.2 570.7L634.0 564.7M611.6 572.3L634.5 566.4M612.0 573.9L634.9 568.0M612.5 575.6L635.3 569.7M612.9 577.2L635.7 571.3M613.3 578.9L636.2 573.0M613.7 580.5L636.6 574.6M614.2 582.2L637.0 576.3" stroke="#a6a6a6" stroke-width="0.8" fill="none"/>
<clipPath id="c5"><polygon points="630.0,572.0 664.0,563.5 666.0,571.0 632.0,580.0"/></clipPath>
<path clip-path="url(#c5)" d="M621.4 556.1L663.6 545.2M621.9 557.7L664.1 546.8M622.3 559.4L664.5 548.5M622.7 561.0L664.9 550.1M623.1 562.7L665.4 551.8M623.6 564.3L665.8 553.4M624.0 566.0L666.2 555.1M624.4 567.6L666.6 556.7M624.8 569.3L667.1 558.4M625.3 570.9L667.5 560.0M625.7 572.6L667.9 561.6M626.1 574.2L668.3 563.3M626.5 575.9L668.8 564.9M627.0 577.5L669.2 566.6M627.4 579.1L669.6 568.2M627.8 580.8L670.0 569.9M628.2 582.4L670.5 571.5M628.7 584.1L670.9 573.2M629.1 585.7L671.3 574.8M629.5 587.4L671.7 576.5M629.9 589.0L672.2 578.1M630.4 590.7L672.6 579.7M630.8 592.3L673.0 581.4M631.2 594.0L673.4 583.0M631.7 595.6L673.9 584.7M632.1 597.2L674.3 586.3" stroke="#a6a6a6" stroke-width="0.8" fill="none"/>
<line x1="527.8" y1="640.0" x2="682.5" y2="606.2" stroke="#4a4a4a" stroke-width="0.7" stroke-dasharray="2.5 1.5"/>
<polygon points="659.5,159.2 745.0,98.0 833.5,227.3 962.7,420.0 990.0,466.0 845.0,546.2" fill="#ffffff" stroke="none" stroke-width="1" />
<polygon points="659.5,159.2 745.0,98.0 840.0,238.0 772.0,290.0 754.0,294.0 727.0,301.0" fill="#fdfefb" stroke="none" stroke-width="1" />
<clipPath id="c6"><polygon points="659.5,159.2 745.0,98.0 840.0,238.0 772.0,290.0 754.0,294.0 727.0,301.0"/></clipPath>
<path clip-path="url(#c6)" d="M581.8 100.6L848.7 31.6M582.4 102.7L849.2 33.7M582.9 104.8L849.8 35.8M583.5 107.0L850.3 38.0M584.0 109.1L850.9 40.1M584.6 111.2L851.4 42.2M585.1 113.4L852.0 44.3M585.7 115.5L852.5 46.5M586.2 117.6L853.1 48.6M586.8 119.7L853.6 50.7M587.3 121.9L854.2 52.9M587.9 124.0L854.7 55.0M588.4 126.1L855.3 57.1M589.0 128.3L855.8 59.3M589.5 130.4L856.4 61.4M590.1 132.5L856.9 63.5M590.6 134.7L857.5 65.6M591.2 136.8L858.0 67.8M591.7 138.9L858.6 69.9M592.3 141.0L859.1 72.0M592.8 143.2L859.7 74.2M593.4 145.3L860.2 76.3M593.9 147.4L860.8 78.4M594.5 149.6L861.3 80.5M595.0 151.7L861.9 82.7M595.6 153.8L862.4 84.8M596.1 156.0L863.0 86.9M596.7 158.1L863.5 89.1M597.2 160.2L864.1 91.2M597.8 162.3L864.6 93.3M598.3 164.5L865.2 95.5M598.9 166.6L865.7 97.6M599.4 168.7L866.3 99.7M600.0 170.9L866.9 101.8M600.5 173.0L867.4 104.0M601.1 175.1L868.0 106.1M601.6 177.3L868.5 108.2M602.2 179.4L869.1 110.4M602.7 181.5L869.6 112.5M603.3 183.6L870.2 114.6M603.8 185.8L870.7 116.8M604.4 187.9L871.3 118.9M604.9 190.0L871.8 121.0M605.5 192.2L872.4 123.1M606.0 194.3L872.9 125.3M606.6 196.4L873.5 127.4M607.1 198.6L874.0 129.5M607.7 200.7L874.6 131.7M608.3 202.8L875.1 133.8M608.8 204.9L875.7 135.9M609.4 207.1L876.2 138.1M609.9 209.2L876.8 140.2M610.5 211.3L877.3 142.3M611.0 213.5L877.9 144.4M611.6 215.6L878.4 146.6M612.1 217.7L879.0 148.7M612.7 219.9L879.5 150.8M613.2 222.0L880.1 153.0M613.8 224.1L880.6 155.1M614.3 226.2L881.2 157.2M614.9 228.4L881.7 159.4M615.4 230.5L882.3 161.5M616.0 232.6L882.8 163.6M616.5 234.8L883.4 165.7M617.1 236.9L883.9 167.9M617.6 239.0L884.5 170.0M618.2 241.2L885.0 172.1M618.7 243.3L885.6 174.3M619.3 245.4L886.1 176.4M619.8 247.5L886.7 178.5M620.4 249.7L887.2 180.7M620.9 251.8L887.8 182.8M621.5 253.9L888.3 184.9M622.0 256.1L888.9 187.0M622.6 258.2L889.4 189.2M623.1 260.3L890.0 191.3M623.7 262.5L890.5 193.4M624.2 264.6L891.1 195.6M624.8 266.7L891.6 197.7M625.3 268.8L892.2 199.8M625.9 271.0L892.7 202.0M626.4 273.1L893.3 204.1M627.0 275.2L893.8 206.2M627.5 277.4L894.4 208.3M628.1 279.5L894.9 210.5M628.6 281.6L895.5 212.6M629.2 283.8L896.0 214.7M629.7 285.9L896.6 216.9M630.3 288.0L897.1 219.0M630.8 290.1L897.7 221.1M631.4 292.3L898.2 223.3M631.9 294.4L898.8 225.4M632.5 296.5L899.4 227.5M633.0 298.7L899.9 229.6M633.6 300.8L900.5 231.8M634.1 302.9L901.0 233.9M634.7 305.0L901.6 236.0M635.2 307.2L902.1 238.2M635.8 309.3L902.7 240.3M636.3 311.4L903.2 242.4M636.9 313.6L903.8 244.6M637.4 315.7L904.3 246.7M638.0 317.8L904.9 248.8M638.5 320.0L905.4 250.9M639.1 322.1L906.0 253.1M639.6 324.2L906.5 255.2M640.2 326.3L907.1 257.3M640.8 328.5L907.6 259.5M641.3 330.6L908.2 261.6M641.9 332.7L908.7 263.7M642.4 334.9L909.3 265.9M643.0 337.0L909.8 268.0M643.5 339.1L910.4 270.1M644.1 341.3L910.9 272.2M644.6 343.4L911.5 274.4M645.2 345.5L912.0 276.5M645.7 347.6L912.6 278.6M646.3 349.8L913.1 280.8M646.8 351.9L913.7 282.9M647.4 354.0L914.2 285.0M647.9 356.2L914.8 287.2M648.5 358.3L915.3 289.3M649.0 360.4L915.9 291.4M649.6 362.6L916.4 293.5M650.1 364.7L917.0 295.7M650.7 366.8L917.5 297.8" stroke="#f3f5ec" stroke-width="0.6" fill="none"/>
<polygon points="727.0,301.0 754.0,294.0 765.0,334.0 744.0,341.0" fill="#fdfefb" stroke="none" stroke-width="1" />
<clipPath id="c7"><polygon points="727.0,301.0 754.0,294.0 765.0,334.0 744.0,341.0"/></clipPath>
<path clip-path="url(#c7)" d="M706.7 294.4L769.1 278.2M707.3 296.5L769.7 280.4M707.8 298.6L770.2 282.5M708.4 300.8L770.8 284.6M708.9 302.9L771.3 286.8M709.5 305.0L771.9 288.9M710.0 307.2L772.4 291.0M710.6 309.3L773.0 293.1M711.1 311.4L773.5 295.3M711.7 313.5L774.1 297.4M712.2 315.7L774.6 299.5M712.8 317.8L775.2 301.7M713.3 319.9L775.7 303.8M713.9 322.1L776.3 305.9M714.5 324.2L776.8 308.1M715.0 326.3L777.4 310.2M715.6 328.5L777.9 312.3M716.1 330.6L778.5 314.4M716.7 332.7L779.0 316.6M717.2 334.8L779.6 318.7M717.8 337.0L780.1 320.8M718.3 339.1L780.7 323.0M718.9 341.2L781.2 325.1M719.4 343.4L781.8 327.2M720.0 345.5L782.3 329.4M720.5 347.6L782.9 331.5M721.1 349.8L783.4 333.6M721.6 351.9L784.0 335.7M722.2 354.0L784.5 337.9M722.7 356.1L785.1 340.0" stroke="#f3f5ec" stroke-width="0.6" fill="none"/>
<polygon points="751.0,354.0 789.0,340.0 803.0,373.0 771.0,393.0" fill="#fdfefb" stroke="none" stroke-width="1" />
<clipPath id="c8"><polygon points="751.0,354.0 789.0,340.0 803.0,373.0 771.0,393.0"/></clipPath>
<path clip-path="url(#c8)" d="M729.3 338.4L805.1 318.8M729.9 340.5L805.6 321.0M730.4 342.7L806.2 323.1M731.0 344.8L806.7 325.2M731.5 346.9L807.3 327.3M732.1 349.1L807.8 329.5M732.6 351.2L808.4 331.6M733.2 353.3L808.9 333.7M733.7 355.5L809.5 335.9M734.3 357.6L810.0 338.0M734.8 359.7L810.6 340.1M735.4 361.8L811.1 342.3M735.9 364.0L811.7 344.4M736.5 366.1L812.2 346.5M737.0 368.2L812.8 348.6M737.6 370.4L813.3 350.8M738.1 372.5L813.9 352.9M738.7 374.6L814.4 355.0M739.2 376.8L815.0 357.2M739.8 378.9L815.5 359.3M740.3 381.0L816.1 361.4M740.9 383.1L816.7 363.6M741.4 385.3L817.2 365.7M742.0 387.4L817.8 367.8M742.5 389.5L818.3 369.9M743.1 391.7L818.9 372.1M743.6 393.8L819.4 374.2M744.2 395.9L820.0 376.3M744.7 398.1L820.5 378.5M745.3 400.2L821.1 380.6M745.9 402.3L821.6 382.7M746.4 404.4L822.2 384.9M747.0 406.6L822.7 387.0M747.5 408.7L823.3 389.1M748.1 410.8L823.8 391.2M748.6 413.0L824.4 393.4" stroke="#f3f5ec" stroke-width="0.6" fill="none"/>
<line x1="754.0" y1="294.0" x2="790.0" y2="378.0" stroke="#d2d2d2" stroke-width="0.6" />
<line x1="765.0" y1="290.0" x2="812.0" y2="392.0" stroke="#d2d2d2" stroke-width="0.6" />
<line x1="776.0" y1="284.0" x2="800.0" y2="330.0" stroke="#d2d2d2" stroke-width="0.6" />
<line x1="744.0" y1="341.0" x2="800.0" y2="318.0" stroke="#d2d2d2" stroke-width="0.6" />
<line x1="752.0" y1="354.0" x2="812.0" y2="330.0" stroke="#d2d2d2" stroke-width="0.6" />
<line x1="733.0" y1="306.0" x2="776.0" y2="284.0" stroke="#d2d2d2" stroke-width="0.6" />
<line x1="760.0" y1="318.0" x2="790.0" y2="305.0" stroke="#d2d2d2" stroke-width="0.6" />
<line x1="770.0" y1="372.0" x2="815.0" y2="352.0" stroke="#d2d2d2" stroke-width="0.6" />
<polygon points="699.2,183.8 722.5,168.8 762.5,228.8 731.2,248.8" fill="#ffffff" stroke="#c9c9c9" stroke-width="0.7" stroke-dasharray="3 1.5"/>
<polygon points="720.0,120.0 743.8,101.0 760.0,126.0 736.0,142.5" fill="#ffffff" stroke="#cfcfcf" stroke-width="0.7" stroke-dasharray="3 1.5"/>
<polyline points="659.5,159.2 745.0,98.0 833.5,227.3 962.7,420.0 990.0,466.0" fill="none" stroke="#8c8c8c" stroke-width="0.7" />
<line x1="745.0" y1="98.0" x2="765.0" y2="84.0" stroke="#bdbdbd" stroke-width="0.7" />
<line x1="747.0" y1="100.0" x2="767.0" y2="86.0" stroke="#cfcfcf" stroke-width="0.7" />
<polyline points="779.0,295.0 842.5,252.5 948.0,412.0" fill="none" stroke="#c6c6c6" stroke-width="0.7" stroke-dasharray="3 1.5"/>
<polyline points="772.0,290.0 838.0,242.0" fill="none" stroke="#cccccc" stroke-width="0.7" stroke-dasharray="3 1.5"/>
<polyline points="779.0,295.0 838.0,388.0" fill="none" stroke="#cccccc" stroke-width="0.7" stroke-dasharray="2 1.5"/>
<polyline points="771.0,303.0 800.0,368.0" fill="none" stroke="#d4d4d4" stroke-width="0.7" stroke-dasharray="2 1.5"/>
<polyline points="760.0,318.0 792.0,302.0" fill="none" stroke="#d4d4d4" stroke-width="0.7" />
<polyline points="772.0,340.0 800.0,324.0" fill="none" stroke="#d4d4d4" stroke-width="0.7" />
<polyline points="780.0,362.0 812.0,345.0" fill="none" stroke="#d4d4d4" stroke-width="0.7" />
<polyline points="812.0,376.0 866.0,468.0 929.0,450.0" fill="none" stroke="#bdbdbd" stroke-width="4" stroke-dasharray="1 1.4"/>
<polyline points="812.0,376.0 838.0,405.0" fill="none" stroke="#bfbfbf" stroke-width="3" stroke-dasharray="1 1.4"/>
<polyline points="848.0,430.0 870.0,475.0 935.0,455.0 962.0,422.0" fill="none" stroke="#c9c9c9" stroke-width="0.6" />
<polygon points="886.0,493.8 967.5,430.0 987.5,466.0 901.0,516.0" fill="#fcfdf9" stroke="#cfcfcf" stroke-width="0.6" />
<clipPath id="c9"><polygon points="886.0,493.8 967.5,430.0 987.5,466.0 901.0,516.0"/></clipPath>
<path clip-path="url(#c9)" d="M841.6 454.5L955.2 377.9M842.9 456.3L956.5 379.7M844.1 458.2L957.7 381.5M845.3 460.0L958.9 383.4M846.6 461.8L960.2 385.2M847.8 463.6L961.4 387.0M849.0 465.5L962.6 388.8M850.2 467.3L963.9 390.6M851.5 469.1L965.1 392.5M852.7 470.9L966.3 394.3M853.9 472.7L967.5 396.1M855.2 474.6L968.8 397.9M856.4 476.4L970.0 399.8M857.6 478.2L971.2 401.6M858.9 480.0L972.5 403.4M860.1 481.9L973.7 405.2M861.3 483.7L974.9 407.1M862.5 485.5L976.2 408.9M863.8 487.3L977.4 410.7M865.0 489.2L978.6 412.5M866.2 491.0L979.8 414.4M867.5 492.8L981.1 416.2M868.7 494.6L982.3 418.0M869.9 496.5L983.5 419.8M871.2 498.3L984.8 421.7M872.4 500.1L986.0 423.5M873.6 501.9L987.2 425.3M874.8 503.8L988.5 427.1M876.1 505.6L989.7 429.0M877.3 507.4L990.9 430.8M878.5 509.2L992.1 432.6M879.8 511.1L993.4 434.4M881.0 512.9L994.6 436.2M882.2 514.7L995.8 438.1M883.5 516.5L997.1 439.9M884.7 518.3L998.3 441.7M885.9 520.2L999.5 443.5M887.2 522.0L1000.8 445.4M888.4 523.8L1002.0 447.2M889.6 525.6L1003.2 449.0M890.8 527.5L1004.4 450.8M892.1 529.3L1005.7 452.7M893.3 531.1L1006.9 454.5M894.5 532.9L1008.1 456.3M895.8 534.8L1009.4 458.1M897.0 536.6L1010.6 460.0M898.2 538.4L1011.8 461.8M899.5 540.2L1013.1 463.6M900.7 542.1L1014.3 465.4M901.9 543.9L1015.5 467.3M903.1 545.7L1016.8 469.1M904.4 547.5L1018.0 470.9M905.6 549.4L1019.2 472.7M906.8 551.2L1020.4 474.5M908.1 553.0L1021.7 476.4M909.3 554.8L1022.9 478.2M910.5 556.6L1024.1 480.0M911.8 558.5L1025.4 481.8M913.0 560.3L1026.6 483.7M914.2 562.1L1027.8 485.5M915.4 563.9L1029.1 487.3M916.7 565.8L1030.3 489.1M917.9 567.6L1031.5 491.0" stroke="#eef1e4" stroke-width="0.6" fill="none"/>
<line x1="845.0" y1="546.2" x2="990.0" y2="466.0" stroke="#9a9a9a" stroke-width="1.3" />
<line x1="845.0" y1="543.5" x2="988.0" y2="463.5" stroke="#c8c8c8" stroke-width="0.7" />
<polyline points="845.0,546.0 780.0,478.0" fill="none" stroke="#d0d0d0" stroke-width="0.6" stroke-dasharray="4 2"/>
<line x1="850.0" y1="535.0" x2="886.0" y2="494.0" stroke="#d0d0d0" stroke-width="0.6" stroke-dasharray="4 2"/>
<polygon points="570.5,207.5 659.5,159.2 845.0,546.2 682.5,606.2" fill="#ffffff" stroke="none" stroke-width="1" />
<polygon points="570.5,207.5 659.5,159.2 774.7,399.5 720.0,414.0 692.5,317.5 608.0,340.0" fill="#e3f0d3" stroke="none" stroke-width="1" />
<line x1="661.3" y1="166.0" x2="750.9" y2="356.0" stroke="#5a5a5a" stroke-width="2.6" stroke-dasharray="0.8 0.8"/>
<polygon points="607.5,254.5 674.0,238.0 684.5,279.5 618.5,296.5" fill="#ffffff" stroke="#2a2a2a" stroke-width="0.7" />
<polygon points="612.5,256.2 672.5,241.8 682.5,277.5 621.2,293.8" fill="#b4d1f0" stroke="#2a2a2a" stroke-width="0.7" />
<polygon points="621.2,294.0 683.0,278.0 690.0,301.5 627.0,318.0" fill="#f6efed" stroke="#2a2a2a" stroke-width="0.7" />
<clipPath id="c10"><polygon points="621.2,294.0 683.0,278.0 690.0,301.5 627.0,318.0"/></clipPath>
<path clip-path="url(#c10)" d="M604.7 268.0L685.6 247.1M605.2 269.9L686.1 248.9M605.7 271.7L686.6 250.8M606.2 273.5L687.0 252.6M606.6 275.4L687.5 254.5M607.1 277.2L688.0 256.3M607.6 279.1L688.5 258.1M608.1 280.9L688.9 260.0M608.5 282.7L689.4 261.8M609.0 284.6L689.9 263.7M609.5 286.4L690.4 265.5M610.0 288.3L690.8 267.3M610.4 290.1L691.3 269.2M610.9 291.9L691.8 271.0M611.4 293.8L692.3 272.9M611.9 295.6L692.7 274.7M612.3 297.5L693.2 276.5M612.8 299.3L693.7 278.4M613.3 301.1L694.2 280.2M613.8 303.0L694.6 282.1M614.2 304.8L695.1 283.9M614.7 306.6L695.6 285.7M615.2 308.5L696.1 287.6M615.7 310.3L696.5 289.4M616.1 312.2L697.0 291.2M616.6 314.0L697.5 293.1M617.1 315.8L698.0 294.9M617.6 317.7L698.5 296.8M618.0 319.5L698.9 298.6M618.5 321.4L699.4 300.4M619.0 323.2L699.9 302.3M619.5 325.0L700.4 304.1M620.0 326.9L700.8 306.0M620.4 328.7L701.3 307.8M620.9 330.6L701.8 309.6M621.4 332.4L702.3 311.5M621.9 334.2L702.7 313.3M622.3 336.1L703.2 315.2M622.8 337.9L703.7 317.0M623.3 339.8L704.2 318.8M623.8 341.6L704.6 320.7M624.2 343.4L705.1 322.5M624.7 345.3L705.6 324.4M625.2 347.1L706.1 326.2" stroke="#4a3c3a" stroke-width="0.75" fill="none"/>
<polygon points="626.0,318.0 690.0,301.5 693.0,317.5 629.5,334.5" fill="#ffffff" stroke="#777" stroke-width="0.5" />
<polygon points="632.0,322.0 655.0,316.0 658.0,327.0 635.0,333.0" fill="#ffffff" stroke="#666" stroke-width="0.5" />
<line x1="659.0" y1="315.5" x2="661.5" y2="325.5" stroke="#333" stroke-width="0.6" />
<line x1="662.2" y1="314.7" x2="664.7" y2="324.7" stroke="#333" stroke-width="0.6" />
<line x1="665.4" y1="313.8" x2="667.9" y2="323.8" stroke="#333" stroke-width="0.6" />
<line x1="668.6" y1="313.0" x2="671.1" y2="323.0" stroke="#333" stroke-width="0.6" />
<line x1="671.8" y1="312.2" x2="674.3" y2="322.2" stroke="#333" stroke-width="0.6" />
<line x1="675.0" y1="311.4" x2="677.5" y2="321.4" stroke="#333" stroke-width="0.6" />
<line x1="678.2" y1="310.5" x2="680.7" y2="320.5" stroke="#333" stroke-width="0.6" />
<line x1="681.4" y1="309.7" x2="683.9" y2="319.7" stroke="#333" stroke-width="0.6" />
<line x1="684.6" y1="308.9" x2="687.1" y2="318.9" stroke="#333" stroke-width="0.6" />
<polygon points="603.8,301.0 618.8,297.1 620.6,303.8 605.6,307.7" fill="#ffffff" stroke="#8a8a8a" stroke-width="0.5" />
<polygon points="605.9,309.1 620.9,305.2 622.7,311.9 607.7,315.8" fill="#ffffff" stroke="#8a8a8a" stroke-width="0.5" />
<polygon points="608.0,317.2 623.0,313.3 624.8,320.0 609.8,323.9" fill="#ffffff" stroke="#8a8a8a" stroke-width="0.5" />
<polygon points="610.1,325.3 625.1,321.4 626.9,328.1 611.9,332.0" fill="#ffffff" stroke="#8a8a8a" stroke-width="0.5" />
<polygon points="608.0,340.0 692.5,317.5 697.5,336.2 613.8,358.8" fill="#ffffff" stroke="none" stroke-width="1" />
<polygon points="632.0,340.5 690.0,325.0 692.0,332.5 634.0,348.0" fill="#ffffff" stroke="#777" stroke-width="0.5" />
<line x1="614.0" y1="341.5" x2="617.0" y2="353.0" stroke="#555" stroke-width="0.5" />
<line x1="618.2" y1="340.4" x2="621.2" y2="351.9" stroke="#555" stroke-width="0.5" />
<line x1="622.4" y1="339.3" x2="625.4" y2="350.8" stroke="#555" stroke-width="0.5" />
<line x1="626.6" y1="338.2" x2="629.6" y2="349.7" stroke="#555" stroke-width="0.5" />
<line x1="630.8" y1="337.1" x2="633.8" y2="348.6" stroke="#555" stroke-width="0.5" />
<line x1="611.0" y1="347.0" x2="634.0" y2="341.0" stroke="#555" stroke-width="0.5" />
<clipPath id="c11"><polygon points="707.5,363.8 753.8,356.0 774.7,399.5 720.0,414.0"/></clipPath>
<path clip-path="url(#c11)" d="M684.6 351.7L774.4 328.5M685.7 356.0L775.5 332.8M686.8 360.2L776.6 337.0M687.9 364.5L777.7 341.3M689.0 368.8L778.8 345.5M690.1 373.0L779.9 349.8M691.2 377.3L781.0 354.1M692.3 381.5L782.1 358.3M693.4 385.8L783.2 362.6M694.5 390.1L784.3 366.8M695.6 394.3L785.4 371.1M696.7 398.6L786.5 375.4M697.8 402.8L787.6 379.6M698.9 407.1L788.7 383.9M700.0 411.4L789.8 388.1M701.1 415.6L790.9 392.4M702.2 419.9L792.0 396.7M703.3 424.1L793.1 400.9M704.4 428.4L794.2 405.2M705.5 432.7L795.3 409.4M706.6 436.9L796.4 413.7M707.7 441.2L797.5 418.0" stroke="#3c3c3c" stroke-width="0.8" fill="none"/>
<pattern id="dots" width="2.6" height="2.6" patternUnits="userSpaceOnUse" patternTransform="rotate(-14.5)"><rect width="2.6" height="2.6" fill="#cfcfcf"/><rect x="0.8" y="0.8" width="0.9" height="0.9" fill="#e6e6e6"/></pattern>
<polygon points="613.8,358.8 697.5,336.2 730.0,452.0 742.5,449.0 766.0,531.5 721.0,545.0 721.0,548.0 672.5,560.0" fill="url(#dots)" stroke="none" stroke-width="1" />
<polygon points="721.0,419.0 735.0,415.3 743.5,449.0 730.5,452.0" fill="url(#dots)" stroke="#777" stroke-width="0.7" />
<polygon points="719.5,414.5 733.3,410.6 734.5,415.0 720.8,418.8" fill="#ffffff" stroke="none" stroke-width="1" />
<polygon points="649.4,363.1 680.9,366.2 678.4,391.6 647.2,389.0" fill="#8c8c8c" stroke="#2e2e2e" stroke-width="0.8" />
<polygon points="651.6,366.2 661.2,367.2 660.0,387.8 650.0,386.9" fill="#ffffff" stroke="none" stroke-width="1" />
<polygon points="667.5,367.8 678.1,368.8 676.6,389.0 666.0,388.1" fill="#ffffff" stroke="none" stroke-width="1" />
<polygon points="688.0,433.0 705.0,428.0 713.8,460.0 696.2,464.5" fill="#ffffff" stroke="#333" stroke-width="0.9" />
<line x1="696.5" y1="430.5" x2="705.0" y2="462.2" stroke="#333" stroke-width="0.8" />
<line x1="690.1" y1="440.9" x2="707.2" y2="436.0" stroke="#333" stroke-width="0.8" />
<line x1="692.1" y1="448.8" x2="709.4" y2="444.0" stroke="#333" stroke-width="0.8" />
<line x1="694.2" y1="456.6" x2="711.6" y2="452.0" stroke="#333" stroke-width="0.8" />
<polygon points="631.0,408.5 637.0,407.0 638.5,413.0 632.5,414.5" fill="#111" stroke="none" stroke-width="1" />
<polygon points="712.0,538.5 719.5,536.5 722.0,546.5 714.5,548.5" fill="#111" stroke="none" stroke-width="1" />
<polygon points="718.5,536.8 720.5,536.2 723.0,546.2 721.0,546.8" fill="#7a4a3a" stroke="none" stroke-width="1" />
<polygon points="681.0,560.0 715.0,551.0 716.5,558.5 682.8,567.0" fill="#111" stroke="none" stroke-width="1" />
<line x1="621.0" y1="408.0" x2="628.0" y2="406.2" stroke="#9a9a9a" stroke-width="0.6" />
<line x1="621.5" y1="410.0" x2="628.5" y2="408.2" stroke="#9a9a9a" stroke-width="0.6" />
<polyline points="676.0,562.0 684.0,597.0 752.0,577.0 750.0,569.0" fill="none" stroke="#777" stroke-width="0.5" />
<polyline points="718.0,552.0 768.0,538.0 775.0,566.0" fill="none" stroke="#666" stroke-width="0.6" />
<polygon points="754.0,549.0 768.0,545.0 775.0,571.0 761.0,575.0" fill="#ffffff" stroke="#444" stroke-width="0.6" />
<line x1="756.5" y1="556.0" x2="770.0" y2="552.3" stroke="#444" stroke-width="0.6" />
<line x1="758.5" y1="563.0" x2="772.0" y2="559.3" stroke="#444" stroke-width="0.6" />
<path d="M760.5 573.5 A10 10 0 0 1 772 565.5" fill="none" stroke="#222" stroke-width="0.7"/>
<path d="M686 585 Q720 572 752 563" fill="none" stroke="#d2d2d2" stroke-width="0.6"/>
<circle cx="690" cy="586" r="3.2" fill="none" stroke="#d0d0d0" stroke-width="0.6"/>
<polygon points="771.0,545.0 834.0,526.0 842.5,546.0 777.5,569.0" fill="#e7eddf" stroke="none" stroke-width="1" />
<clipPath id="c12"><polygon points="771.0,545.0 834.0,526.0 842.5,546.0 777.5,569.0"/></clipPath>
<path clip-path="url(#c12)" d="M752.4 518.0L836.3 493.2M753.2 520.8L837.1 495.9M754.1 523.6L837.9 498.7M754.9 526.3L838.7 501.5M755.7 529.1L839.5 504.3M756.5 531.9L840.4 507.1M757.4 534.7L841.2 509.9M758.2 537.5L842.0 512.6M759.0 540.2L842.8 515.4M759.8 543.0L843.7 518.2M760.7 545.8L844.5 521.0M761.5 548.6L845.3 523.8M762.3 551.4L846.1 526.5M763.1 554.1L847.0 529.3M763.9 556.9L847.8 532.1M764.8 559.7L848.6 534.9M765.6 562.5L849.4 537.7M766.4 565.3L850.3 540.4M767.2 568.0L851.1 543.2M768.1 570.8L851.9 546.0M768.9 573.6L852.7 548.8M769.7 576.4L853.5 551.6M770.5 579.2L854.4 554.3M771.4 582.0L855.2 557.1M772.2 584.7L856.0 559.9M773.0 587.5L856.8 562.7M773.8 590.3L857.7 565.5M774.7 593.1L858.5 568.2M775.5 595.9L859.3 571.0M776.3 598.6L860.1 573.8M777.1 601.4L861.0 576.6" stroke="#454545" stroke-width="1.0" fill="none"/>
<path d="M772 548 Q790 550 800 562 Q806 548 818 535 M818 535 Q822 545 820 556 M826 548 Q829 538 838 534" fill="none" stroke="#222" stroke-width="0.7"/>
<polyline points="581.2,238.0 635.0,223.0 627.5,193.8 623.8,181.2" fill="none" stroke="#1a1a8a" stroke-width="1.3" />
<polyline points="608.0,340.0 692.5,317.5 697.5,336.2" fill="none" stroke="#1a1a8a" stroke-width="1.4" />
<polyline points="613.8,358.8 697.5,336.2 730.0,452.0 742.5,449.0 766.0,531.5 721.0,545.0 721.0,548.5 672.5,561.0" fill="none" stroke="#1a1a8a" stroke-width="2.2" />
<line x1="766.5" y1="533.5" x2="722.0" y2="547.5" stroke="#1a1a8a" stroke-width="1.0" />
<line x1="672.8" y1="560.6" x2="721.0" y2="547.6" stroke="#1a1a8a" stroke-width="3.0" />
<line x1="720.0" y1="414.0" x2="772.5" y2="399.5" stroke="#1a1a8a" stroke-width="1.3" />
<line x1="733.3" y1="410.4" x2="743.8" y2="449.0" stroke="#1a1a8a" stroke-width="2.0" />
<line x1="762.5" y1="507.0" x2="817.0" y2="491.0" stroke="#1a1a8a" stroke-width="1.3" />
<polyline points="608.0,340.0 613.8,358.8" fill="none" stroke="#1a1a8a" stroke-width="1.0" />
<polygon points="570.5,207.5 659.5,159.2 845.0,546.2 682.5,606.2" fill="none" stroke="#d7201f" stroke-width="2.2" stroke-linejoin="miter"/>
<polyline points="685.6,603.3 574.6,210.5 657.3,165.6" fill="none" stroke="#3a3a3a" stroke-width="0.8" />
<line x1="601.8" y1="138.0" x2="828.0" y2="612.5" stroke="#d7201f" stroke-width="1.7" />
<line x1="621.2" y1="128.8" x2="848.0" y2="603.0" stroke="#d7201f" stroke-width="1.7" />
<text transform="translate(711,364) rotate(64.5)" font-size="5" textLength="84" lengthAdjust="spacingAndGlyphs" fill="#d7201f" stroke="#d7201f" stroke-width="0.3" font-family="Liberation Sans, sans-serif" font-weight="bold">Afastamento de 5.00m ao limite do terreno</text>
<text transform="translate(735,358) rotate(64.5)" font-size="5" textLength="84" lengthAdjust="spacingAndGlyphs" fill="#d7201f" stroke="#d7201f" stroke-width="0.3" font-family="Liberation Sans, sans-serif" font-weight="bold">Afastamento de 3.00m ao limite do terreno</text>
<line x1="938.8" y1="84.0" x2="1066.0" y2="202.5" stroke="#c9c9c9" stroke-width="0.7" />
<line x1="937.0" y1="85.9" x2="1064.2" y2="204.4" stroke="#c9c9c9" stroke-width="0.7" />
<line x1="868.8" y1="84.0" x2="1066.0" y2="298.0" stroke="#c9c9c9" stroke-width="0.7" />
<line x1="866.8" y1="85.8" x2="1064.1" y2="299.8" stroke="#c9c9c9" stroke-width="0.7" />
<line x1="995.0" y1="465.0" x2="1066.0" y2="402.5" stroke="#c9c9c9" stroke-width="0.7" />
<line x1="996.5" y1="466.7" x2="1067.5" y2="404.2" stroke="#c9c9c9" stroke-width="0.7" />
<path d="M300 690 L527 641" fill="none" stroke="#c9c9c9" stroke-width="0.7"/>
<path d="M318 690 L528 644.5" fill="none" stroke="#c9c9c9" stroke-width="0.6"/>
<path d="M420 690 L683 628 Q720 620 760 603 T840 575 Q900 540 945 513.5 T1015 475 L1066 438.5" fill="none" stroke="#c9c9c9" stroke-width="0.7"/>
<path d="M683 609 Q715 600 745 602 Q790 592 838 556" fill="none" stroke="#d6d6d6" stroke-width="0.6"/>
<path d="M838 682 Q885 664 929 642 T999 608 L1022 593 L1066 563.5" fill="none" stroke="#c9c9c9" stroke-width="0.7"/>
<path d="M999 608 L1013 635.5 L925 684" fill="none" stroke="#c9c9c9" stroke-width="0.7"/>
<path d="M1022 593 L1066 619.5" fill="none" stroke="#c9c9c9" stroke-width="0.7"/>
<path d="M1045 580 L1066 565" fill="none" stroke="#c9c9c9" stroke-width="0.0"/>
<path d="M745 618 L770 690" fill="none" stroke="#d9d9d9" stroke-width="0.6"/>
<circle cx="408" cy="673.5" r="3.8" fill="#fff" stroke="#d6d6d6" stroke-width="0.7"/>
<circle cx="423.5" cy="673.5" r="3.8" fill="#fff" stroke="#d6d6d6" stroke-width="0.7"/>
<circle cx="548" cy="645" r="3.8" fill="#fff" stroke="#d6d6d6" stroke-width="0.7"/>
<circle cx="566.5" cy="641" r="3.8" fill="#fff" stroke="#d6d6d6" stroke-width="0.7"/>
<circle cx="704.5" cy="607.5" r="3.8" fill="#fff" stroke="#d6d6d6" stroke-width="0.7"/>
<circle cx="720" cy="604.5" r="3.8" fill="#fff" stroke="#d6d6d6" stroke-width="0.7"/>
<circle cx="871.4" cy="547.2" r="3.8" fill="#fff" stroke="#d6d6d6" stroke-width="0.7"/>
<circle cx="871" cy="578.5" r="3.8" fill="#fff" stroke="#d6d6d6" stroke-width="0.7"/>
<circle cx="899" cy="587.2" r="3.8" fill="#fff" stroke="#d6d6d6" stroke-width="0.7"/>
<circle cx="1016.5" cy="460" r="3.8" fill="#fff" stroke="#d6d6d6" stroke-width="0.7"/>
<circle cx="1029" cy="453.5" r="3.8" fill="#fff" stroke="#d6d6d6" stroke-width="0.7"/>
<rect x="733" y="603" width="8" height="5.5" fill="#fff" stroke="#d0d0d0" stroke-width="0.6" transform="rotate(-14 737 606)"/>
<rect x="645" y="641" width="7" height="4" fill="#fff" stroke="#d6d6d6" stroke-width="0.6" transform="rotate(-14 648 643)"/>
<circle cx="557" cy="196" r="3.6" fill="#fff" stroke="#cfcfcf" stroke-width="0.7"/>
<line x1="557.0" y1="196.0" x2="570.5" y2="207.5" stroke="#cfcfcf" stroke-width="0.6" />
<circle cx="659.5" cy="145.5" r="3.6" fill="#fff" stroke="#cfcfcf" stroke-width="0.7"/>
<line x1="659.5" y1="145.5" x2="659.5" y2="159.2" stroke="#cfcfcf" stroke-width="0.6" />
<circle cx="803.8" cy="562.6" r="2.2" fill="#d7201f"/>
<text transform="translate(693,692) rotate(-21)" font-size="14.5" fill="#d6d6d6" font-family="Liberation Sans, sans-serif">da Murtinheira</text>
<line x1="346.8" y1="192.5" x2="361.8" y2="192.5" stroke="#222" stroke-width="1" />
<line x1="354.2" y1="185.0" x2="354.2" y2="200.0" stroke="#222" stroke-width="1" />
<line x1="346.8" y1="481.2" x2="361.8" y2="481.2" stroke="#222" stroke-width="1" />
<line x1="354.2" y1="473.8" x2="354.2" y2="488.8" stroke="#222" stroke-width="1" />
<line x1="924.2" y1="192.5" x2="939.2" y2="192.5" stroke="#222" stroke-width="1" />
<line x1="931.8" y1="185.0" x2="931.8" y2="200.0" stroke="#222" stroke-width="1" />
<text x="234.5" y="290.3" font-size="6.2" fill="#111" stroke="#111" stroke-width="0.2" font-family="Liberation Sans, sans-serif" textLength="13.6" lengthAdjust="spacingAndGlyphs">63.15</text>
<text x="291.0" y="277.8" font-size="6.2" fill="#111" stroke="#111" stroke-width="0.2" font-family="Liberation Sans, sans-serif" textLength="13.6" lengthAdjust="spacingAndGlyphs">63.14</text>
<text x="348.0" y="265.3" font-size="6.2" fill="#111" stroke="#111" stroke-width="0.2" font-family="Liberation Sans, sans-serif" textLength="13.6" lengthAdjust="spacingAndGlyphs">63.16</text>
<text x="413.8" y="250.8" font-size="6.2" fill="#111" stroke="#111" stroke-width="0.2" font-family="Liberation Sans, sans-serif" textLength="13.6" lengthAdjust="spacingAndGlyphs">63.14</text>
<text x="438.0" y="245.3" font-size="6.2" fill="#111" stroke="#111" stroke-width="0.2" font-family="Liberation Sans, sans-serif" textLength="13.6" lengthAdjust="spacingAndGlyphs">63.17</text>
<text x="501.0" y="223.3" font-size="6.2" fill="#111" stroke="#111" stroke-width="0.2" font-family="Liberation Sans, sans-serif" textLength="13.6" lengthAdjust="spacingAndGlyphs">63.99</text>
<text x="891.0" y="104.8" font-size="6.2" fill="#111" stroke="#111" stroke-width="0.2" font-family="Liberation Sans, sans-serif" textLength="13.6" lengthAdjust="spacingAndGlyphs">62.46</text>
<text x="680.5" y="576.8" font-size="6.2" fill="#111" stroke="#111" stroke-width="0.2" font-family="Liberation Sans, sans-serif" textLength="13.6" lengthAdjust="spacingAndGlyphs">63.30</text>
<text x="698.0" y="594.3" font-size="6.2" fill="#111" stroke="#111" stroke-width="0.2" font-family="Liberation Sans, sans-serif" textLength="13.6" lengthAdjust="spacingAndGlyphs">63.57</text>
<text x="685.0" y="599.8" font-size="6.2" fill="#111" stroke="#111" stroke-width="0.2" font-family="Liberation Sans, sans-serif" textLength="13.6" lengthAdjust="spacingAndGlyphs">63.48</text>
<text x="709.5" y="603.3" font-size="6.2" fill="#111" stroke="#111" stroke-width="0.2" font-family="Liberation Sans, sans-serif" textLength="13.6" lengthAdjust="spacingAndGlyphs">63.60</text>
<text x="732.0" y="599.0" font-size="6.2" fill="#111" stroke="#111" stroke-width="0.2" font-family="Liberation Sans, sans-serif" textLength="13.6" lengthAdjust="spacingAndGlyphs">63.61</text>
<text x="750.0" y="589.3" font-size="6.2" fill="#111" stroke="#111" stroke-width="0.2" font-family="Liberation Sans, sans-serif" textLength="13.6" lengthAdjust="spacingAndGlyphs">63.65</text>
<text x="756.0" y="598.0" font-size="6.2" fill="#111" stroke="#111" stroke-width="0.2" font-family="Liberation Sans, sans-serif" textLength="13.6" lengthAdjust="spacingAndGlyphs">63.65</text>
<text x="683.0" y="612.3" font-size="6.2" fill="#111" stroke="#111" stroke-width="0.2" font-family="Liberation Sans, sans-serif" textLength="13.6" lengthAdjust="spacingAndGlyphs">63.57</text>
<text x="698.8" y="617.3" font-size="6.2" fill="#111" stroke="#111" stroke-width="0.2" font-family="Liberation Sans, sans-serif" textLength="13.6" lengthAdjust="spacingAndGlyphs">63.59</text>
<text x="718.0" y="614.3" font-size="6.2" fill="#111" stroke="#111" stroke-width="0.2" font-family="Liberation Sans, sans-serif" textLength="13.6" lengthAdjust="spacingAndGlyphs">63.61</text>
<text x="745.0" y="616.8" font-size="6.2" fill="#111" stroke="#111" stroke-width="0.2" font-family="Liberation Sans, sans-serif" textLength="13.6" lengthAdjust="spacingAndGlyphs">63.49</text>
<text x="651.0" y="619.0" font-size="6.2" fill="#111" stroke="#111" stroke-width="0.2" font-family="Liberation Sans, sans-serif" textLength="13.6" lengthAdjust="spacingAndGlyphs">63.52</text>
<text x="631.0" y="623.0" font-size="6.2" fill="#111" stroke="#111" stroke-width="0.2" font-family="Liberation Sans, sans-serif" textLength="13.6" lengthAdjust="spacingAndGlyphs">63.54</text>
<text x="653.8" y="640.1" font-size="6.2" fill="#111" stroke="#111" stroke-width="0.2" font-family="Liberation Sans, sans-serif" textLength="13.6" lengthAdjust="spacingAndGlyphs">63.34</text>
<text x="674.4" y="636.7" font-size="6.2" fill="#111" stroke="#111" stroke-width="0.2" font-family="Liberation Sans, sans-serif" textLength="13.6" lengthAdjust="spacingAndGlyphs">63.41</text>
<text x="692.2" y="633.0" font-size="6.2" fill="#111" stroke="#111" stroke-width="0.2" font-family="Liberation Sans, sans-serif" textLength="13.6" lengthAdjust="spacingAndGlyphs">63.41</text>
<text x="800.5" y="593.3" font-size="6.2" fill="#111" stroke="#111" stroke-width="0.2" font-family="Liberation Sans, sans-serif" textLength="13.6" lengthAdjust="spacingAndGlyphs">63.57</text>
<text x="801.0" y="568.3" font-size="6.2" fill="#111" stroke="#111" stroke-width="0.2" font-family="Liberation Sans, sans-serif" textLength="13.6" lengthAdjust="spacingAndGlyphs">63.62</text>
<text x="838.8" y="554.8" font-size="6.2" fill="#111" stroke="#111" stroke-width="0.2" font-family="Liberation Sans, sans-serif" textLength="13.6" lengthAdjust="spacingAndGlyphs">63.69</text>
<text x="853.8" y="546.8" font-size="6.2" fill="#111" stroke="#111" stroke-width="0.2" font-family="Liberation Sans, sans-serif" textLength="13.6" lengthAdjust="spacingAndGlyphs">63.86</text>
<text x="860.0" y="556.0" font-size="6.2" fill="#111" stroke="#111" stroke-width="0.2" font-family="Liberation Sans, sans-serif" textLength="13.6" lengthAdjust="spacingAndGlyphs">63.76</text>
<text x="860.5" y="569.0" font-size="6.2" fill="#111" stroke="#111" stroke-width="0.2" font-family="Liberation Sans, sans-serif" textLength="13.6" lengthAdjust="spacingAndGlyphs">63.63</text>
<text x="864.0" y="588.3" font-size="6.2" fill="#111" stroke="#111" stroke-width="0.2" font-family="Liberation Sans, sans-serif" textLength="13.6" lengthAdjust="spacingAndGlyphs">63.68</text>
<text x="802.5" y="647.8" font-size="6.2" fill="#111" stroke="#111" stroke-width="0.2" font-family="Liberation Sans, sans-serif" textLength="13.6" lengthAdjust="spacingAndGlyphs">63.62</text>
<text x="841.8" y="676.7" font-size="6.2" fill="#111" stroke="#111" stroke-width="0.2" font-family="Liberation Sans, sans-serif" textLength="13.6" lengthAdjust="spacingAndGlyphs">63.57</text>
<text x="514.0" y="647.3" font-size="6.2" fill="#111" stroke="#111" stroke-width="0.2" font-family="Liberation Sans, sans-serif" textLength="13.6" lengthAdjust="spacingAndGlyphs">63.30</text>
<text x="529.3" y="645.3" font-size="6.2" fill="#111" stroke="#111" stroke-width="0.2" font-family="Liberation Sans, sans-serif" textLength="13.6" lengthAdjust="spacingAndGlyphs">63.29</text>
<text x="541.5" y="654.1" font-size="6.2" fill="#111" stroke="#111" stroke-width="0.2" font-family="Liberation Sans, sans-serif" textLength="13.6" lengthAdjust="spacingAndGlyphs">63.30</text>
<text x="560.0" y="650.7" font-size="6.2" fill="#111" stroke="#111" stroke-width="0.2" font-family="Liberation Sans, sans-serif" textLength="13.6" lengthAdjust="spacingAndGlyphs">63.31</text>
<text x="546.7" y="664.1" font-size="6.2" fill="#111" stroke="#111" stroke-width="0.2" font-family="Liberation Sans, sans-serif" textLength="13.6" lengthAdjust="spacingAndGlyphs">63.22</text>
<text x="570.4" y="635.2" font-size="6.2" fill="#111" stroke="#111" stroke-width="0.2" font-family="Liberation Sans, sans-serif" textLength="13.6" lengthAdjust="spacingAndGlyphs">63.35</text>
<text x="592.2" y="631.2" font-size="6.2" fill="#111" stroke="#111" stroke-width="0.2" font-family="Liberation Sans, sans-serif" textLength="13.6" lengthAdjust="spacingAndGlyphs">63.36</text>
<text x="482.5" y="655.3" font-size="6.2" fill="#111" stroke="#111" stroke-width="0.2" font-family="Liberation Sans, sans-serif" textLength="13.6" lengthAdjust="spacingAndGlyphs">63.30</text>
<text x="458.8" y="660.3" font-size="6.2" fill="#111" stroke="#111" stroke-width="0.2" font-family="Liberation Sans, sans-serif" textLength="13.6" lengthAdjust="spacingAndGlyphs">63.32</text>
<text x="434.5" y="666.8" font-size="6.2" fill="#111" stroke="#111" stroke-width="0.2" font-family="Liberation Sans, sans-serif" textLength="13.6" lengthAdjust="spacingAndGlyphs">63.26</text>
<text x="392.5" y="673.0" font-size="6.2" fill="#111" stroke="#111" stroke-width="0.2" font-family="Liberation Sans, sans-serif" textLength="13.6" lengthAdjust="spacingAndGlyphs">63.25</text>
<text x="377.0" y="678.0" font-size="6.2" fill="#111" stroke="#111" stroke-width="0.2" font-family="Liberation Sans, sans-serif" textLength="13.6" lengthAdjust="spacingAndGlyphs">63.25</text>
<text x="418.0" y="682.3" font-size="6.2" fill="#111" stroke="#111" stroke-width="0.2" font-family="Liberation Sans, sans-serif" textLength="13.6" lengthAdjust="spacingAndGlyphs">64.26</text>
<text x="398.0" y="684.0" font-size="6.2" fill="#111" stroke="#111" stroke-width="0.2" font-family="Liberation Sans, sans-serif" textLength="13.6" lengthAdjust="spacingAndGlyphs">63.24</text>
<text x="355.0" y="684.8" font-size="6.2" fill="#111" stroke="#111" stroke-width="0.2" font-family="Liberation Sans, sans-serif" textLength="13.6" lengthAdjust="spacingAndGlyphs">63.18</text>
<text x="1033.8" y="447.3" font-size="6.2" fill="#111" stroke="#111" stroke-width="0.2" font-family="Liberation Sans, sans-serif" textLength="13.6" lengthAdjust="spacingAndGlyphs">64.05</text>
<text x="1026.8" y="464.1" font-size="6.2" fill="#111" stroke="#111" stroke-width="0.2" font-family="Liberation Sans, sans-serif" textLength="13.6" lengthAdjust="spacingAndGlyphs">64.04</text>
<text x="1011.0" y="469.8" font-size="6.2" fill="#111" stroke="#111" stroke-width="0.2" font-family="Liberation Sans, sans-serif" textLength="13.6" lengthAdjust="spacingAndGlyphs">64.02</text>
<text x="995.0" y="471.1" font-size="6.2" fill="#111" stroke="#111" stroke-width="0.2" font-family="Liberation Sans, sans-serif" textLength="13.6" lengthAdjust="spacingAndGlyphs">64.01</text>
<text x="1020.5" y="477.8" font-size="6.2" fill="#111" stroke="#111" stroke-width="0.2" font-family="Liberation Sans, sans-serif" textLength="13.6" lengthAdjust="spacingAndGlyphs">63.88</text>
<text x="965.8" y="491.3" font-size="6.2" fill="#111" stroke="#111" stroke-width="0.2" font-family="Liberation Sans, sans-serif" textLength="13.6" lengthAdjust="spacingAndGlyphs">63.94</text>
<text x="955.0" y="494.3" font-size="6.2" fill="#111" stroke="#111" stroke-width="0.2" font-family="Liberation Sans, sans-serif" textLength="13.6" lengthAdjust="spacingAndGlyphs">63.96</text>
<text x="958.8" y="518.0" font-size="6.2" fill="#111" stroke="#111" stroke-width="0.2" font-family="Liberation Sans, sans-serif" textLength="13.6" lengthAdjust="spacingAndGlyphs">63.80</text>
<text x="908.8" y="521.0" font-size="6.2" fill="#111" stroke="#111" stroke-width="0.2" font-family="Liberation Sans, sans-serif" textLength="13.6" lengthAdjust="spacingAndGlyphs">63.87</text>
<text x="898.0" y="525.3" font-size="6.2" fill="#111" stroke="#111" stroke-width="0.2" font-family="Liberation Sans, sans-serif" textLength="13.6" lengthAdjust="spacingAndGlyphs">63.87</text>
<text x="883.8" y="532.3" font-size="6.2" fill="#111" stroke="#111" stroke-width="0.2" font-family="Liberation Sans, sans-serif" textLength="13.6" lengthAdjust="spacingAndGlyphs">63.86</text>
<text x="900.0" y="550.3" font-size="6.2" fill="#111" stroke="#111" stroke-width="0.2" font-family="Liberation Sans, sans-serif" textLength="13.6" lengthAdjust="spacingAndGlyphs">63.68</text>
<text x="993.8" y="555.3" font-size="6.2" fill="#111" stroke="#111" stroke-width="0.2" font-family="Liberation Sans, sans-serif" textLength="13.6" lengthAdjust="spacingAndGlyphs">63.89</text>
<text x="891.8" y="596.7" font-size="6.2" fill="#111" stroke="#111" stroke-width="0.2" font-family="Liberation Sans, sans-serif" textLength="13.6" lengthAdjust="spacingAndGlyphs">63.75</text>
<text x="890.7" y="610.1" font-size="6.2" fill="#111" stroke="#111" stroke-width="0.2" font-family="Liberation Sans, sans-serif" textLength="13.6" lengthAdjust="spacingAndGlyphs">63.75</text>
<text x="956.7" y="619.3" font-size="6.2" fill="#111" stroke="#111" stroke-width="0.2" font-family="Liberation Sans, sans-serif" textLength="13.6" lengthAdjust="spacingAndGlyphs">63.74</text>
<text x="985.5" y="605.0" font-size="6.2" fill="#111" stroke="#111" stroke-width="0.2" font-family="Liberation Sans, sans-serif" textLength="13.6" lengthAdjust="spacingAndGlyphs">63.78</text>
<text x="1017.8" y="585.3" font-size="6.2" fill="#111" stroke="#111" stroke-width="0.2" font-family="Liberation Sans, sans-serif" textLength="13.6" lengthAdjust="spacingAndGlyphs">63.85</text>
<text x="1025.5" y="618.3" font-size="6.2" fill="#111" stroke="#111" stroke-width="0.2" font-family="Liberation Sans, sans-serif" textLength="13.6" lengthAdjust="spacingAndGlyphs">63.88</text>
<text x="996.7" y="636.7" font-size="6.2" fill="#111" stroke="#111" stroke-width="0.2" font-family="Liberation Sans, sans-serif" textLength="13.6" lengthAdjust="spacingAndGlyphs">63.86</text>
<text x="969.0" y="652.3" font-size="6.2" fill="#111" stroke="#111" stroke-width="0.2" font-family="Liberation Sans, sans-serif" textLength="13.6" lengthAdjust="spacingAndGlyphs">63.79</text>
<text x="906.0" y="647.3" font-size="6.2" fill="#111" stroke="#111" stroke-width="0.2" font-family="Liberation Sans, sans-serif" textLength="13.6" lengthAdjust="spacingAndGlyphs">63.66</text>
<text x="919.0" y="678.3" font-size="6.2" fill="#111" stroke="#111" stroke-width="0.2" font-family="Liberation Sans, sans-serif" textLength="13.6" lengthAdjust="spacingAndGlyphs">63.72</text>
<text x="966.7" y="90.4" font-size="10" textLength="24.3" lengthAdjust="spacingAndGlyphs" fill="#222" font-family="Liberation Sans, sans-serif">190,40</text>
<text x="440" y="535.2" font-size="3.6" fill="#333" font-family="Liberation Sans, sans-serif">Cumeeira</text>
<text x="440" y="540" font-size="3.6" fill="#333" font-family="Liberation Sans, sans-serif">70.10</text>
<text x="1061.5" y="488" font-size="6.6" fill="#1a1a1a" font-family="Liberation Sans, sans-serif">6</text>
</g>
</svg>
<svg class="abs" style="left:0;top:0" width="1280" height="720" viewBox="0 0 1280 720">
<line x1="1222.5" y1="86" x2="1222.5" y2="682" stroke="#222" stroke-width="1"/>
<line x1="1079.5" y1="121.5" x2="1218" y2="121.5" stroke="#222" stroke-width="1"/>
<text x="1079.5" y="128.9" font-size="7.9" fill="#222" font-family="Liberation Sans, sans-serif" textLength="31" lengthAdjust="spacingAndGlyphs">Descrição:</text>
<text x="1119.2" y="145.9" font-size="8.6" fill="#222" font-family="Liberation Sans, sans-serif" textLength="57.7" lengthAdjust="spacingAndGlyphs">ARQUITECTURA</text>
<line x1="1079.5" y1="186.5" x2="1218" y2="186.5" stroke="#777" stroke-width="1"/>
<text x="1079.5" y="194.6" font-size="7.9" fill="#222" font-family="Liberation Sans, sans-serif" textLength="30.5" lengthAdjust="spacingAndGlyphs">Desenhos:</text>
<text x="1111.8" y="220.9" font-size="8.6" fill="#222" font-family="Liberation Sans, sans-serif" textLength="72.5" lengthAdjust="spacingAndGlyphs">Planta de Implantação</text>
<line x1="1079.5" y1="254.5" x2="1218" y2="254.5" stroke="#222" stroke-width="1"/>
<text x="1079.5" y="261.6" font-size="7.9" fill="#222" font-family="Liberation Sans, sans-serif" textLength="24.5" lengthAdjust="spacingAndGlyphs">Escalas:</text>
<text x="1140.5" y="274.0" font-size="8.6" fill="#222" font-family="Liberation Sans, sans-serif" textLength="18" lengthAdjust="spacingAndGlyphs">1:200</text>
<line x1="1079.5" y1="283" x2="1218" y2="283" stroke="#666" stroke-width="1"/>
<text x="1079.5" y="290.3" font-size="7.9" fill="#222" font-family="Liberation Sans, sans-serif" textLength="15" lengthAdjust="spacingAndGlyphs">Data:</text>
<text x="1130.0" y="301.0" font-size="8.6" fill="#222" font-family="Liberation Sans, sans-serif" textLength="36" lengthAdjust="spacingAndGlyphs">21/10/2024</text>
<line x1="1079.5" y1="312.5" x2="1218" y2="312.5" stroke="#222" stroke-width="1"/>
<text x="1079.5" y="319.6" font-size="7.9" fill="#222" font-family="Liberation Sans, sans-serif" textLength="36" lengthAdjust="spacingAndGlyphs">Requerente:</text>
<text x="1085.0" y="339.0" font-size="8.6" fill="#222" font-weight="bold" font-family="Liberation Sans, sans-serif" textLength="124" lengthAdjust="spacingAndGlyphs">KI SIMPLE – TECHNICAL, TRAINING</text>
<text x="1088.2" y="349.0" font-size="8.6" fill="#222" font-weight="bold" font-family="Liberation Sans, sans-serif" textLength="117.7" lengthAdjust="spacingAndGlyphs">AND CONSULTING, UNIPESSOAL,</text>
<text x="1140.0" y="359.4" font-size="8.6" fill="#222" font-weight="bold" font-family="Liberation Sans, sans-serif" textLength="14" lengthAdjust="spacingAndGlyphs">LDA</text>
<line x1="1079.5" y1="369" x2="1218" y2="369" stroke="#222" stroke-width="1"/>
<text x="1079.5" y="376.3" font-size="7.9" fill="#222" font-family="Liberation Sans, sans-serif" textLength="40" lengthAdjust="spacingAndGlyphs">Tipo de Obra:</text>
<text x="1103.5" y="401.7" font-size="8.6" fill="#222" font-family="Liberation Sans, sans-serif" textLength="89" lengthAdjust="spacingAndGlyphs">MORADIA UNIFAMILIAR E</text>
<text x="1134.5" y="412.3" font-size="8.6" fill="#222" font-family="Liberation Sans, sans-serif" textLength="27" lengthAdjust="spacingAndGlyphs">MUROS</text>
<line x1="1079.5" y1="424.5" x2="1218" y2="424.5" stroke="#222" stroke-width="1"/>
<text x="1079.5" y="431.6" font-size="7.9" fill="#222" font-family="Liberation Sans, sans-serif" textLength="43" lengthAdjust="spacingAndGlyphs">Local da Obra:</text>
<text x="1095.5" y="452.3" font-size="8.6" fill="#222" font-family="Liberation Sans, sans-serif" textLength="105" lengthAdjust="spacingAndGlyphs">URBANIZAÇÃO MURTINHEIRA</text>
<text x="1098.5" y="463.4" font-size="8.6" fill="#222" font-family="Liberation Sans, sans-serif" textLength="99" lengthAdjust="spacingAndGlyphs">LOTE 16, ERICEIRA / MAFRA</text>
<line x1="1079.5" y1="492" x2="1218" y2="492" stroke="#222" stroke-width="1"/>
<text x="1079.5" y="499.6" font-size="7.9" fill="#222" font-family="Liberation Sans, sans-serif" textLength="22" lengthAdjust="spacingAndGlyphs">N / Ref:</text>
<text x="1131.5" y="512.3" font-size="8.6" fill="#222" font-family="Liberation Sans, sans-serif" textLength="33" lengthAdjust="spacingAndGlyphs">085-05-16</text>
<line x1="1079.5" y1="521.5" x2="1218" y2="521.5" stroke="#222" stroke-width="1"/>
<text x="1079.5" y="528.1" font-size="7.9" fill="#222" font-family="Liberation Sans, sans-serif" textLength="27" lengthAdjust="spacingAndGlyphs">Nº Folha:</text>
<text x="1124.0" y="539.8" font-size="12.5" fill="#222" font-weight="bold" font-family="Liberation Sans, sans-serif" textLength="48" lengthAdjust="spacingAndGlyphs">03.00 PP</text>
<line x1="1079.5" y1="550.5" x2="1218" y2="550.5" stroke="#222" stroke-width="1"/>
<text x="1079.5" y="557.8" font-size="7.9" fill="#222" font-family="Liberation Sans, sans-serif" textLength="65" lengthAdjust="spacingAndGlyphs">Técnico Responsável:</text>
<text x="1109.5" y="575.9" font-size="8.6" fill="#222" font-family="Liberation Sans, sans-serif" textLength="77" lengthAdjust="spacingAndGlyphs">CARLOS RUIVO, ARQ.</text>
<text x="1130.0" y="586.0" font-size="8.6" fill="#222" font-family="Liberation Sans, sans-serif" textLength="36" lengthAdjust="spacingAndGlyphs">1 931 OA s</text>
<line x1="1079.5" y1="597.5" x2="1218" y2="597.5" stroke="#222" stroke-width="1"/>
<text x="1079.5" y="604.5" font-size="7.9" fill="#222" font-family="Liberation Sans, sans-serif" textLength="24" lengthAdjust="spacingAndGlyphs">Rubrica:</text>
<line x1="1079.5" y1="616.5" x2="1218" y2="616.5" stroke="#888" stroke-width="1.5"/>
<text x="1079.5" y="624.5" font-size="7.9" fill="#222" font-family="Liberation Sans, sans-serif" textLength="40" lengthAdjust="spacingAndGlyphs">Coordenador:</text>
<text x="1109.5" y="635.0" font-size="8.6" fill="#222" font-family="Liberation Sans, sans-serif" textLength="77" lengthAdjust="spacingAndGlyphs">CARLOS RUIVO, ARQ.</text>
<text x="1079.5" y="641.3" font-size="7.9" fill="#222" font-family="Liberation Sans, sans-serif" textLength="45" lengthAdjust="spacingAndGlyphs">Colaboradores:</text>
<text x="1122.0" y="649.7" font-size="8.6" fill="#222" font-family="Liberation Sans, sans-serif" textLength="53" lengthAdjust="spacingAndGlyphs">ANA LINDO, ARQ.</text>
<text x="1105.5" y="657.2" font-size="8.6" fill="#222" font-family="Liberation Sans, sans-serif" textLength="85" lengthAdjust="spacingAndGlyphs">PATRÍCIA ESTROMPA, ARQ.</text>
<text x="1109.0" y="665.7" font-size="8.6" fill="#222" font-family="Liberation Sans, sans-serif" textLength="78" lengthAdjust="spacingAndGlyphs">NICOLE LUDOVINO, ARQ.</text>
<text x="1119.0" y="674.0" font-size="8.6" fill="#222" font-family="Liberation Sans, sans-serif" textLength="60" lengthAdjust="spacingAndGlyphs">PEDRO MOTA, TEC.</text>
<line x1="1079.5" y1="675" x2="1218" y2="675" stroke="#444" stroke-width="1"/>
</svg>
<!-- floating quick tools -->
<div class="abs" style="left:201px;top:93.500px;width:25px;height:168px;background:#fff;border:1px solid #d8d8d8;border-radius:4px;box-shadow:0 1px 2px rgba(0,0,0,.08)"></div>
<div class="abs" style="left:203.500px;top:97px;width:20px;height:2px;background:#bdbdbd;border-radius:1px"></div>
<div class="abs" style="left:203px;top:105px;width:21px;height:20.500px;background:#0d66d0;border-radius:3px"></div>
<svg class="abs" style="left:201px;top:93px" width="26" height="170" viewBox="201 93 26 170">
  <path d="M210.300 109.500v9.600l2.300-2.100 1.700 3.700 1.500-.7-1.700-3.600 3.100-.2Z" fill="#fff"/>
  <path d="M222 120.500v2.500h-2.500Z" fill="#fff"/>
  <g fill="none" stroke="#222" stroke-width="1.200" stroke-linecap="round" stroke-linejoin="round">
    <path d="M212.500 137.200a4.600 4.600 0 1 0 0 9.200h4.600v-4.600a4.600 4.600 0 0 0-4.600-4.600Z"/><path d="M210.800 140.600h3.800M210.800 142.800h3.800" stroke-width="1"/>
    <path d="M209.500 171.500l6-7.500 2 1.600-6 7.500-2.600.8ZM208 175.500c2-1.500 4-1 6-.5" />
    <path d="M212 199c3-.3 5.800-1.600 5.800-3.600 0-1.700-2.400-2.300-4.800-1.600-2.700.8-4.400 2.800-3.600 4.400.6 1.200 2.600 1.300 4.800 2.400"/>
    <path d="M209.500 243.500l5.500-1.500 3.200 3.200-1.500 5.500-5.500 1.500-3.200-3.200ZM208 252.200l3.500-3.500M215 242l2-2 3.200 3.200-2 2"/>
  </g>
  <rect x="207.500" y="215.500" width="11" height="12" fill="none" stroke="#222" stroke-width="1.200" stroke-dasharray="1.500 1.200"/>
  <text x="213" y="225.400" font-size="8.500" font-weight="bold" text-anchor="middle" fill="#222" font-family="Liberation Sans, sans-serif">A</text>
  <g fill="#222"><path d="M222 147.500v2.500h-2.500Z"/><path d="M222 174v2.500h-2.500Z"/><path d="M222 200.500v2.500h-2.500Z"/><path d="M222 227.500v2.500h-2.500Z"/><path d="M222 254v2.500h-2.500Z"/></g>
</svg>
<div id="vscroll">
  <div class="abs" style="left:.5px;top:44.500px;width:9px;height:36.500px;background:#cdcdcd"></div>
  <svg class="abs" style="left:0;top:0" width="12" height="606" viewBox="0 0 12 606"><path d="M2.800 8.500l2.700-2.800 2.700 2.800M2.800 589.500l2.700 2.800 2.700-2.800" fill="none" stroke="#555" stroke-width="1.300"/></svg>
</div>
<div id="hscroll">
  <div class="abs" style="left:0;top:0;width:79px;height:10px;background:#e6e6e6"></div>
  <div class="t" style="left:14px;top:-.8px;font-size:8.300px;color:#333">420 x 297 mm</div>
  <div class="abs" style="left:246px;top:.5px;width:744px;height:9px;background:#cdcdcd"></div>
  <svg class="abs" style="left:0;top:0" width="1003" height="10" viewBox="0 0 1003 10"><path d="M87.500 2.300l-2.800 2.700 2.800 2.700M991.500 2.300l2.800 2.700-2.800 2.700" fill="none" stroke="#444" stroke-width="1.300"/></svg>
</div>
<div id="rail">
  <svg class="abs" style="left:0;top:0" width="31" height="637" viewBox="1249 55 31 637">
    <g transform="translate(1257,65)" fill="none" stroke="#5a3fd0" stroke-width="1.100" stroke-linejoin="round" stroke-linecap="round"><path d="M8 2.500h-5.500v9.500h10v-5.500"/><path d="M4.500 5.500h3M4.500 7.500h4M4.500 9.500h2.500" stroke-width=".9"/><path d="M11.300.8l.6 1.500 1.500.6-1.500.6-.6 1.500-.6-1.500-1.500-.6 1.500-.6Z" fill="#5a3fd0" stroke="none"/><path d="M9 7.500l1.200-1-1.200-1" stroke-width=".9"/></g>
    <line x1="1256" y1="86.500" x2="1272" y2="86.500" stroke="#e6e6e6"/>
    <g fill="none" stroke="#222" stroke-width="1.200" stroke-linecap="round" stroke-linejoin="round">
      <path d="M1264.500 97a4.200 4.200 0 1 0 0 8.400h4.200v-4.200a4.200 4.200 0 0 0-4.200-4.200Z"/><path d="M1263 100.200h3.400M1263 102.200h3.400" stroke-width="1"/><path d="M1259.800 99a4.600 4.600 0 0 0 3 7.800h3" />
      <path d="M1259.500 122h6.500v11.500l-3.250-2.800-3.250 2.800Z"/>
      <path d="M1262.500 150.500h4l2.500 2.500v6.500h-6.500ZM1260.500 157.500h-1.500v-9h5v1.500"/>
      <path d="M1260.700 563.500l3.300-3.300 3.300 3.300" stroke="#9a9a9a" stroke-width="1.500"/>
      <path d="M1260.700 583.500l3.300 3.300 3.300-3.300" stroke-width="1.600"/>
      <path d="M1268.500 609.500a4.500 4.500 0 1 1-1.500-3.400M1268 603v3.300h-3.300" stroke-width="1.300"/>
      <path d="M1260.500 628.500h5l2.500 2.500v7.500h-7.500ZM1263 635.500l2.500-2.500M1265.500 635.500v-2.500h-2.500" />
      <circle cx="1263.500" cy="656.500" r="3.600"/><path d="M1266.200 659.300l3 3M1261.800 656.500h3.400M1263.500 654.800v3.400"/>
      <circle cx="1263.500" cy="680" r="3.600"/><path d="M1266.200 682.800l3 3M1261.800 680h3.400"/>
    </g>
    <g stroke="#8a8a8a" stroke-width="1"><path d="M1268 124.500h2.500M1268 126.500h2.500M1268 128.500h2.500"/></g>
    <path d="M1271.500 638v2.500h-2.500Z" fill="#222"/>
    <rect x="1253.500" y="504.500" width="21" height="20.500" rx="3" fill="#fff" stroke="#c4c4c4"/>
    <text x="1264" y="518" font-size="9.500" text-anchor="middle" fill="#222" font-family="Liberation Sans, sans-serif">1</text>
    <text x="1264.500" y="540.500" font-size="9.500" text-anchor="middle" fill="#222" font-family="Liberation Sans, sans-serif">10</text>
    <line x1="1256" y1="597.500" x2="1272" y2="597.500" stroke="#ececec"/>
  </svg>
</div>
<div id="taskbar">
  <div class="abs" style="left:32px;top:0;width:192px;height:27px;background:#f1f1f1"></div>
  <div class="abs" style="left:356px;top:0;width:32px;height:27px;background:#4b4b4d"></div>
  <div class="t" style="left:58.500px;top:7.800px;font-size:9.700px;color:#2a2a2a">Procurar</div>
  <svg class="abs" style="left:0;top:0" width="1280" height="28" viewBox="0 693 1280 28">
    <g fill="#fff"><path d="M10.500 702.300l4.200-.6v4.200h-4.200ZM15.300 701.600l5.400-.8v5.100h-5.400ZM10.500 706.600h4.200v4.200l-4.200-.6ZM15.300 706.600h5.400v5.100l-5.400-.8Z"/></g>
    <circle cx="47.500" cy="704.700" r="3.600" fill="none" stroke="#222" stroke-width="1.200"/><path d="M44.900 707.500l-4 4.200" stroke="#222" stroke-width="1.300" stroke-linecap="round"/>
    <g fill="none" stroke="#fff" stroke-width="1.100"><rect x="235.500" y="703" width="6.500" height="6.500"/><path d="M234 701h10M234 711.500h10" stroke-width="1"/></g>
    <g fill="#fff"><rect x="243.700" y="702.800" width="1.600" height="1.600"/><rect x="243.700" y="706" width="1.600" height="3.500"/></g>
    <!-- explorer -->
    <path d="M266.500 701.500h5l1.200 1.300h8.300v9.200h-14.500Z" fill="#f3c74c"/><rect x="266.500" y="704" width="14.500" height="8" fill="#f8d775"/><path d="M269.500 712v-4.200h8.500v4.200h-2.300v-2h-3.900v2Z" fill="#4a97d0"/>
    <!-- chrome -->
    <circle cx="306.500" cy="706.300" r="7.800" fill="#e8453c"/>
    <path d="M306.500 706.300L299.700 702.400A7.800 7.800 0 0 0 305 714Z" fill="#2da94f"/>
    <path d="M306.500 706.300L305 714A7.800 7.800 0 0 0 313.300 702.400Z" fill="#fbbc09"/>
    <path d="M306.500 706.300L313.300 702.400A7.800 7.800 0 0 0 299.700 702.400Z" fill="#e8453c"/>
    <circle cx="306.500" cy="706.300" r="3.700" fill="#fff"/><circle cx="306.500" cy="706.300" r="2.900" fill="#3f87e8"/>
    <!-- teams -->
    <circle cx="344" cy="702.500" r="2" fill="#7b83eb"/><rect x="341" y="705" width="6.500" height="6.500" rx="1.800" fill="#7b83eb"/>
    <circle cx="339.500" cy="701.500" r="2.600" fill="#5b5fc7"/><path d="M335.500 704.800h8v5.500a4 4 0 0 1-8 0Z" fill="#5b5fc7"/>
    <rect x="331.500" y="702.800" width="7.500" height="7.500" rx="1" fill="#4b53bc"/><path d="M333.300 704.800h4M335.300 704.800v4.200" stroke="#fff" stroke-width="1.100"/>
    <!-- acrobat -->
    <rect x="365" y="700" width="14.200" height="13.600" rx="2" fill="#c5211c"/>
    <path d="M368.300 710.800c1.400-1.800 3-5 3.300-7 .2-1.200-.9-1.300-1-.2-.2 2 2 5 4.600 5.800 1.200.3 1.300-.8.100-.9-2.200-.2-5 .8-6.700 2.100-.9.700-.8 1.100-.300.200Z" fill="none" stroke="#fff" stroke-width="1.100" stroke-linejoin="round"/>
    <g fill="#8fc6ee"><rect x="261" y="718.300" width="26" height="1.700"/><rect x="293" y="718.300" width="27" height="1.700"/><rect x="356" y="718.300" width="32" height="1.700"/></g>
    <!-- weather -->
    <path d="M1023 714.300a3.400 3.400 0 0 1-.5-6.750 5 5 0 0 1 9.300-1.300 4.100 4.100 0 0 1 1.200 8.050Z" fill="#a9c9f2"/>
    <path d="M1027 714.300a2.700 2.700 0 0 1 .2-5.400 3.800 3.800 0 0 1 7 .5 2.500 2.500 0 0 1-.2 4.900Z" fill="#cfe0f7"/>
    <circle cx="1032.300" cy="702.200" r="3.600" fill="#d93a34"/><rect x="1031.800" y="700.200" width="1" height="2.600" fill="#fff"/><rect x="1031.800" y="703.400" width="1" height="1" fill="#fff"/>
    <g fill="none" stroke="#fff" stroke-width="1.100" stroke-linecap="round" stroke-linejoin="round">
      <path d="M1138.200 709l3.800-3.800 3.800 3.800"/>
      <rect x="1154.500" y="702" width="6" height="9.500" rx="1.500"/><path d="M1156 704.500h4.500v4.500h-4.500ZM1160.500 706l2-1v4l-2-1" stroke-width=".9"/>
      <path d="M1170.500 702.500h9v6h-9ZM1169.500 702.500v4h3.500v4M1171.500 711.300h4" stroke-width=".9"/>
      <path d="M1185.500 705.300h1.800l2.400-2.300v7.600l-2.400-2.300h-1.800Z" stroke-width=".9"/><path d="M1191.500 704.500a3 3 0 0 1 0 4.500" stroke="#9a9a9a" stroke-width=".8"/><path d="M1193 703a5 5 0 0 1 0 7.500" stroke="#777" stroke-width=".8"/>
      <path d="M1253.500 700.500h9v7h-5.500l-2 2v-2h-1.500Z" fill="#fff" stroke="#fff"/>
    </g>
    <path d="M1255.500 702.800h5M1255.500 704.800h5" stroke="#1c1c1e" stroke-width=".8"/>
    <circle cx="1263.500" cy="711.300" r="4.100" fill="#1c1c1e" stroke="#fff" stroke-width=".9"/>
    <text x="1263.500" y="714" font-size="7" font-weight="bold" text-anchor="middle" fill="#fff" font-family="Liberation Sans, sans-serif">2</text>
  </svg>
  <div class="t" style="left:1042px;top:8px;font-size:9.300px;color:#fff">19°C</div>
  <div class="t" style="left:1066.500px;top:8px;font-size:9.300px;color:#fff">Ger. Nublado</div>
  <div class="t" style="left:1201px;top:1.200px;width:40px;text-align:center;font-size:8.300px;color:#fff">16:00</div>
  <div class="t" style="left:1201px;top:13.800px;width:41px;text-align:center;font-size:8.300px;color:#fff;letter-spacing:-.25px">18/03/2026</div>
</div>
</body>
</html>
